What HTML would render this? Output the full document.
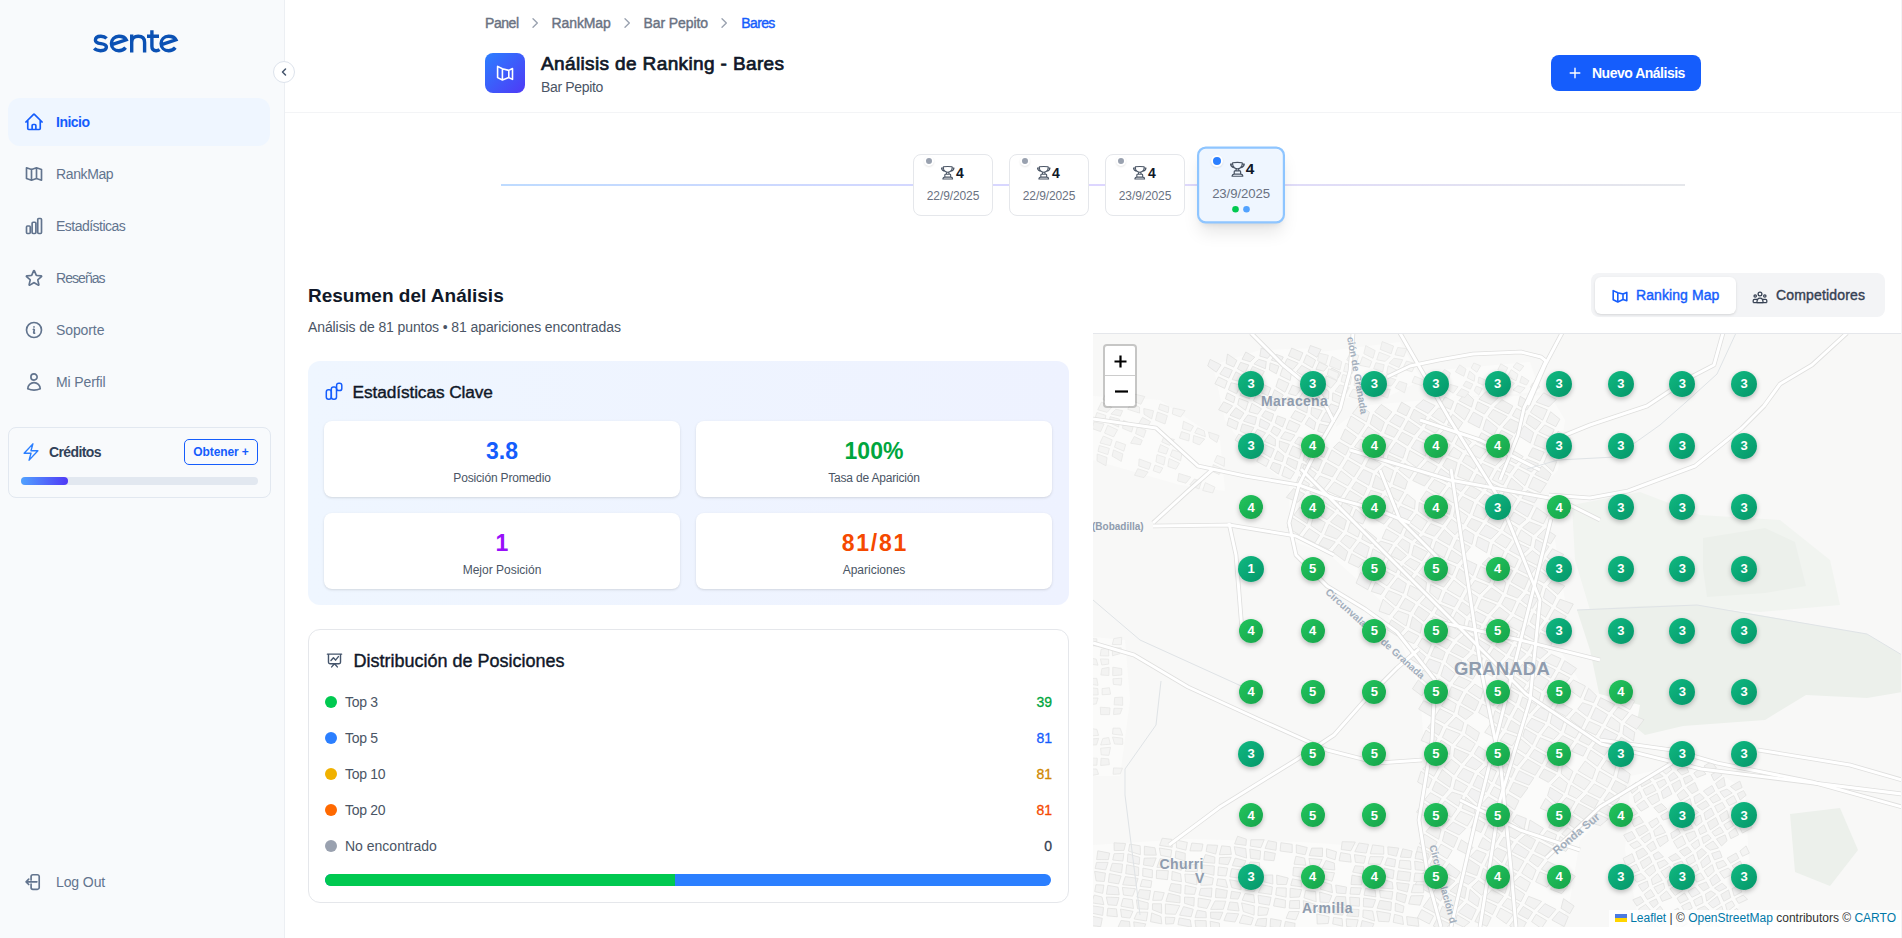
<!DOCTYPE html>
<html lang="es">
<head>
<meta charset="utf-8">
<title>Análisis de Ranking - Bares</title>
<style>
*{box-sizing:border-box;margin:0;padding:0}
html,body{width:1902px;height:938px;overflow:hidden;background:#fff;font-family:"Liberation Sans",sans-serif;color:#101828}
.abs{position:absolute}
svg{display:block}
.med{-webkit-text-stroke:0.4px currentColor}
/* sidebar */
#sb{position:absolute;left:0;top:0;width:285px;height:938px;background:#f8fafc;border-right:1px solid #eceff3}
.nav{position:absolute;left:8px;width:262px;height:48px;border-radius:12px;color:#62748e;font-size:14px;white-space:nowrap}
.nav svg{position:absolute;left:16px;top:14px;width:20px;height:20px}
.nav span{position:absolute;left:48px;top:16px;line-height:16px}
.nav.act{background:#eff6ff;color:#155dfc;font-weight:700}
.toggle{position:absolute;left:273px;top:61px;width:22px;height:22px;border-radius:50%;background:#fff;border:1px solid #dde3ec;z-index:5}
.toggle svg{position:absolute;left:4px;top:4px}
.credits{position:absolute;left:8px;top:427px;width:263px;height:71px;border:1px solid #e2e8f0;border-radius:8px;background:#f8fafc}
/* header */
#hdr{position:absolute;left:285px;top:0;width:1617px;height:113px;background:#fff;border-bottom:1px solid #f3f4f6}
.bc{position:absolute;top:15px;font-size:14px;line-height:16px;color:#6a7282;white-space:nowrap}
.chev{position:absolute;top:15px}
.btn{position:absolute;left:1551px;top:55px;width:150px;height:36px;border-radius:8px;background:#155dfc;color:#fff}
/* timeline */
.tcard{position:absolute;width:80px;height:62px;border:1px solid #e5e7eb;border-radius:8px;background:#fff}
.tdot{position:absolute;width:10px;height:10px;border-radius:50%;background:#99a1af;border:2px solid #fff;box-shadow:0 1px 2px rgba(0,0,0,.1)}
.tnum{position:absolute;font-weight:700;font-size:14px;line-height:16px;color:#101828}
.tdate{position:absolute;left:0;right:0;text-align:center;font-size:12px;line-height:14px;color:#6a7282;letter-spacing:-0.1px}
/* stats */
.stats{position:absolute;left:308px;top:361px;width:761px;height:244px;border-radius:12px;background:linear-gradient(90deg,#eff6ff,#eef2ff)}
.scard{position:absolute;width:356px;height:76px;background:#fff;border-radius:8px;box-shadow:0 1px 3px rgba(0,0,0,.1),0 1px 2px -1px rgba(0,0,0,.1);text-align:center}
.sval{position:absolute;left:0;right:0;top:17px;font-size:23px;line-height:26px;font-weight:700}
.slab{position:absolute;left:0;right:0;top:50px;font-size:12px;line-height:14px;color:#4a5565}
.dist{position:absolute;left:308px;top:629px;width:761px;height:274px;border-radius:12px;background:#fff;border:1px solid #e5e7eb}
.drow{position:absolute;left:16px;width:727px;height:20px;font-size:14px;color:#4a5565}
.drow .d{position:absolute;left:0;top:4px;width:12px;height:12px;border-radius:50%}
.drow .l{position:absolute;left:20px;top:2px;line-height:16px}
.drow .v{position:absolute;right:0;top:2px;line-height:16px;-webkit-text-stroke:0.3px currentColor}
.tabs{position:absolute;left:1591px;top:273px;width:294px;height:44px;border-radius:8px;background:#f3f4f6}
.tab{position:absolute;top:4px;height:36px;border-radius:6px;font-size:14px;white-space:nowrap}
#map{position:absolute;left:1093px;top:333px;width:809px;height:594px;background:#f8f8f7;overflow:hidden;border-top:1px solid #e5e7eb;border-right:1px solid #e5e7eb}
.mk{position:absolute;border-radius:50%;color:#fff;font-weight:700;font-size:13px;line-height:13px;text-align:center;box-shadow:0 2px 5px rgba(0,0,0,.25);font-family:"Liberation Sans",sans-serif}
.mk.t3{width:26px;height:26px;padding-top:6.3px;background:linear-gradient(135deg,#10b981,#059669)}
.mk.t5{width:24px;height:24px;padding-top:5.3px;background:linear-gradient(135deg,#22c55e,#16a34a)}
.zoom{position:absolute;left:10px;top:10px;width:34px;height:64px;border:2px solid rgba(0,0,0,.2);border-radius:4px;background:#fff;background-clip:padding-box}
.attr{position:absolute;right:0;bottom:0;height:17px;padding:0 5px 0 6px;background:rgba(255,255,255,.8);font-size:12px;color:#333;line-height:17px;white-space:nowrap}
.attr a{color:#0078a8;text-decoration:none}
.mlab{position:absolute;color:#8f9cae;font-weight:700;white-space:nowrap;line-height:1}
</style>
</head>
<body>
<!-- SIDEBAR -->
<div id="sb">
  <svg class="abs" style="left:85px;top:22px" width="100" height="38" viewBox="0 0 100 38" fill="none" stroke="#0b51b4" stroke-width="3.4" stroke-linecap="butt">
    <path d="M21.6 16.4C20.2 15 18.2 14.3 15.9 14.3C12.6 14.3 10.4 15.8 10.4 18.2C10.4 23.3 21.4 20.1 21.4 25.1C21.4 27.5 19 28.7 15.5 28.7C13 28.7 10.8 28 9.2 26.4"/>
    <path d="M26.8 22.7L41.2 17.8C40 15.4 37.2 14.3 33.9 14.3C29.5 14.3 26.4 17.4 26.4 21.5C26.4 25.6 29.5 28.7 33.9 28.7C36.6 28.7 38.9 27.7 40.6 25.6"/>
    <path d="M46.7 12.6V30.4M46.7 20.4C46.7 16.5 49.3 14.3 53.2 14.3C57.1 14.3 59.6 16.5 59.6 20.4V30.4"/>
    <path d="M66.9 8.2V24.3C66.9 27.3 68.4 28.7 71.1 28.7C72.4 28.7 73.6 28.4 74.6 27.7M62 14.3H74"/>
    <path d="M76.5 22.7L90.9 17.8C89.7 15.4 86.9 14.3 83.6 14.3C79.2 14.3 76.1 17.4 76.1 21.5C76.1 25.6 79.2 28.7 83.6 28.7C86.3 28.7 88.6 27.7 90.3 25.6"/>
  </svg>
  <div class="nav act" style="top:98px"><svg viewBox="0 0 24 24" fill="none" stroke="currentColor" stroke-width="2" stroke-linecap="round" stroke-linejoin="round"><path d="M2.25 12l8.954-8.955c.44-.439 1.152-.439 1.591 0L21.75 12M4.5 9.75v10.125c0 .621.504 1.125 1.125 1.125H9.75v-4.875c0-.621.504-1.125 1.125-1.125h2.25c.621 0 1.125.504 1.125 1.125V21h4.125c.621 0 1.125-.504 1.125-1.125V9.75M8.25 21h8.25"/></svg><span style="letter-spacing:-0.5px">Inicio</span></div>
  <div class="nav" style="top:150px"><svg viewBox="0 0 24 24" fill="none" stroke="currentColor" stroke-width="2" stroke-linecap="round" stroke-linejoin="round"><path d="M3 4.5L9 6.5L15 4.5L21 6.5V19.5L15 17.5L9 19.5L3 17.5Z M9 6.5V19.5 M15 4.5V17.5"/></svg><span style="letter-spacing:-0.38px">RankMap</span></div>
  <div class="nav" style="top:202px"><svg viewBox="0 0 24 24" fill="none" stroke="currentColor" stroke-width="2" stroke-linecap="round" stroke-linejoin="round"><path d="M3 13.125C3 12.504 3.504 12 4.125 12h2.25c.621 0 1.125.504 1.125 1.125v6.75C7.5 20.496 6.996 21 6.375 21h-2.25A1.125 1.125 0 0 1 3 19.875v-6.75ZM9.75 8.625c0-.621.504-1.125 1.125-1.125h2.25c.621 0 1.125.504 1.125 1.125v11.25c0 .621-.504 1.125-1.125 1.125h-2.25a1.125 1.125 0 0 1-1.125-1.125V8.625ZM16.5 4.125c0-.621.504-1.125 1.125-1.125h2.25C20.496 3 21 3.504 21 4.125v15.75c0 .621-.504 1.125-1.125 1.125h-2.25a1.125 1.125 0 0 1-1.125-1.125V4.125Z"/></svg><span style="letter-spacing:-0.52px">Estadísticas</span></div>
  <div class="nav" style="top:254px"><svg viewBox="0 0 24 24" fill="none" stroke="currentColor" stroke-width="2" stroke-linecap="round" stroke-linejoin="round"><path d="M11.48 3.499a.562.562 0 0 1 1.04 0l2.125 5.111a.563.563 0 0 0 .475.345l5.518.442c.499.04.701.663.321.988l-4.204 3.602a.563.563 0 0 0-.182.557l1.285 5.385a.562.562 0 0 1-.84.61l-4.725-2.885a.562.562 0 0 0-.586 0L6.982 20.54a.562.562 0 0 1-.84-.61l1.285-5.386a.562.562 0 0 0-.182-.557l-4.204-3.602a.562.562 0 0 1 .321-.988l5.518-.442a.563.563 0 0 0 .475-.345L11.48 3.5Z"/></svg><span style="letter-spacing:-0.95px">Reseñas</span></div>
  <div class="nav" style="top:306px"><svg viewBox="0 0 24 24" fill="none" stroke="currentColor" stroke-width="2" stroke-linecap="round" stroke-linejoin="round"><path d="m11.25 11.25.041-.02a.75.75 0 0 1 1.063.852l-.708 2.836a.75.75 0 0 0 1.063.853l.041-.021M21 12a9 9 0 1 1-18 0 9 9 0 0 1 18 0Zm-9-3.75h.008v.008H12V8.25Z"/></svg><span style="letter-spacing:-0.1px">Soporte</span></div>
  <div class="nav" style="top:358px"><svg viewBox="0 0 24 24" fill="none" stroke="currentColor" stroke-width="2" stroke-linecap="round" stroke-linejoin="round"><path d="M15.75 6a3.75 3.75 0 1 1-7.5 0 3.75 3.75 0 0 1 7.5 0ZM4.501 20.118a7.5 7.5 0 0 1 14.998 0A17.933 17.933 0 0 1 12 21.75c-2.676 0-5.216-.584-7.499-1.632Z"/></svg><span style="letter-spacing:-0.12px">Mi Perfil</span></div>
  <div class="credits">
    <svg class="abs" style="left:12px;top:14px" width="20" height="20" viewBox="0 0 24 24" fill="none" stroke="#2b7fff" stroke-width="1.7" stroke-linecap="round" stroke-linejoin="round"><path d="m3.75 13.5 10.5-11.25L12 10.5h8.25L9.75 21.75 12 13.5H3.75Z"/></svg>
    <div class="abs" style="left:40px;top:16px;font-size:14px;line-height:16px;font-weight:700;color:#314158;letter-spacing:-0.6px">Créditos</div>
    <div class="abs" style="left:175px;top:11px;width:74px;height:26px;border:1px solid #155dfc;border-radius:5px;font-size:12px;font-weight:700;color:#155dfc;text-align:center;line-height:25px;letter-spacing:-0.1px">Obtener +</div>
    <div class="abs" style="left:12px;top:49px;width:237px;height:8px;border-radius:4px;background:#e2e8f0"><div style="width:47px;height:8px;border-radius:4px;background:linear-gradient(90deg,#51a2ff,#4f39f6)"></div></div>
  </div>
  <div class="nav" style="top:858px"><svg viewBox="0 0 24 24" fill="none" stroke="currentColor" stroke-width="2" stroke-linecap="round" stroke-linejoin="round"><path d="M8.5 9.5V5.5A2.25 2.25 0 0 1 10.75 3.25h5.25A2.25 2.25 0 0 1 18.25 5.5v13a2.25 2.25 0 0 1-2.25 2.25h-5.25A2.25 2.25 0 0 1 8.5 18.5V14.5M15.5 11.8H2.5m0 0 3.2-3.2m-3.2 3.2 3.2 3.2"/></svg><span style="letter-spacing:-0.1px">Log Out</span></div>
</div>

<!-- HEADER -->
<div id="hdr"></div>
<div class="toggle"><svg width="12" height="12" viewBox="0 0 24 24" fill="none" stroke="#45556c" stroke-width="3" stroke-linecap="round" stroke-linejoin="round"><path d="M15 18l-6-6 6-6"/></svg></div>
<div class="bc med" style="left:485px;letter-spacing:-0.45px">Panel</div>
<div class="bc med" style="left:551.5px;letter-spacing:-0.1px">RankMap</div>
<div class="bc med" style="left:643.5px;letter-spacing:-0.1px">Bar Pepito</div>
<div class="bc med" style="left:741.3px;color:#155dfc;letter-spacing:-0.64px">Bares</div>
<svg class="abs" style="left:527px;top:15px" width="16" height="16" viewBox="0 0 24 24" fill="none" stroke="#99a1af" stroke-width="2" stroke-linecap="round" stroke-linejoin="round"><path d="M9 5.5l6.5 6.5-6.5 6.5"/></svg>
<svg class="abs" style="left:619px;top:15px" width="16" height="16" viewBox="0 0 24 24" fill="none" stroke="#99a1af" stroke-width="2" stroke-linecap="round" stroke-linejoin="round"><path d="M9 5.5l6.5 6.5-6.5 6.5"/></svg>
<svg class="abs" style="left:716px;top:15px" width="16" height="16" viewBox="0 0 24 24" fill="none" stroke="#99a1af" stroke-width="2" stroke-linecap="round" stroke-linejoin="round"><path d="M9 5.5l6.5 6.5-6.5 6.5"/></svg>
<div class="abs" style="left:485px;top:53px;width:40px;height:40px;border-radius:8px;background:linear-gradient(135deg,#2b7fff,#4f39f6)"><svg class="abs" style="left:0;top:0" width="40" height="40" viewBox="0 0 40 40" fill="none" stroke="#fff" stroke-width="1.6" stroke-linejoin="round"><path d="M12.6 13.4L17.4 15.8L23.8 17.4L27.5 15.5V26.4L23.8 24.6L17.4 27L12.6 24.6Z M17.4 15.8V27 M23.8 17.4V24.6"/></svg></div>
<div class="abs" style="left:541px;top:53px;font-size:19px;line-height:22px;font-weight:400;-webkit-text-stroke:0.7px #101828;color:#101828;white-space:nowrap;letter-spacing:0.37px">Análisis de Ranking - Bares</div>
<div class="abs" style="left:541px;top:79px;font-size:14px;line-height:16px;color:#4a5565;letter-spacing:-0.35px">Bar Pepito</div>
<div class="btn"><svg class="abs" style="left:18px;top:12px" width="12" height="12" viewBox="0 0 12 12" fill="none" stroke="#fff" stroke-width="1.4" stroke-linecap="round"><path d="M6 1.2v9.6M1.2 6h9.6"/></svg><span class="abs" style="left:41px;top:10px;font-size:14px;line-height:16px;font-weight:700;letter-spacing:-0.5px;white-space:nowrap">Nuevo Análisis</span></div>

<!-- TIMELINE -->
<div class="abs" style="left:501px;top:184px;width:1184px;height:2px;background:linear-gradient(90deg,#bedbff,#ddd6ff 50%,#e5e7eb)"></div>
<div class="tcard" style="left:913px;top:154px"><svg class="abs" style="left:26.3px;top:10.3px" width="15.5" height="15.5" viewBox="0 0 24 24" fill="none" stroke="#4a5565" stroke-width="1.7" stroke-linecap="round" stroke-linejoin="round"><path d="M16.5 18.75h-9m9 0a3 3 0 0 1 3 3h-15a3 3 0 0 1 3-3m9 0v-3.375c0-.621-.503-1.125-1.125-1.125h-.871M7.5 18.75v-3.375c0-.621.504-1.125 1.125-1.125h.872m5.007 0H9.497m5.007 0a7.454 7.454 0 0 1-.982-3.172M9.497 14.25a7.454 7.454 0 0 0 .981-3.172M5.25 4.236c-.982.143-1.954.317-2.916.52A6.003 6.003 0 0 0 7.73 9.728M5.25 4.236V4.5c0 2.108.966 3.99 2.48 5.228M5.25 4.236V2.721C7.456 2.41 9.71 2.25 12 2.25c2.291 0 4.545.16 6.75.47v1.516M7.73 9.728a6.726 6.726 0 0 0 2.748 1.35m8.272-6.842V4.5c0 2.108-.966 3.99-2.48 5.228m2.48-5.492a46.32 46.32 0 0 1 2.916.52 6.003 6.003 0 0 1-5.395 4.972m0 0a6.727 6.727 0 0 1-2.749 1.35m0 0a6.772 6.772 0 0 1-3.044 0"/></svg><div class="tnum" style="left:42px;top:10.2px">4</div><div class="tdate" style="top:33.6px">22/9/2025</div></div>
<div class="tdot" style="left:924px;top:156px"></div>
<div class="tcard" style="left:1009px;top:154px"><svg class="abs" style="left:26.3px;top:10.3px" width="15.5" height="15.5" viewBox="0 0 24 24" fill="none" stroke="#4a5565" stroke-width="1.7" stroke-linecap="round" stroke-linejoin="round"><path d="M16.5 18.75h-9m9 0a3 3 0 0 1 3 3h-15a3 3 0 0 1 3-3m9 0v-3.375c0-.621-.503-1.125-1.125-1.125h-.871M7.5 18.75v-3.375c0-.621.504-1.125 1.125-1.125h.872m5.007 0H9.497m5.007 0a7.454 7.454 0 0 1-.982-3.172M9.497 14.25a7.454 7.454 0 0 0 .981-3.172M5.25 4.236c-.982.143-1.954.317-2.916.52A6.003 6.003 0 0 0 7.73 9.728M5.25 4.236V4.5c0 2.108.966 3.99 2.48 5.228M5.25 4.236V2.721C7.456 2.41 9.71 2.25 12 2.25c2.291 0 4.545.16 6.75.47v1.516M7.73 9.728a6.726 6.726 0 0 0 2.748 1.35m8.272-6.842V4.5c0 2.108-.966 3.99-2.48 5.228m2.48-5.492a46.32 46.32 0 0 1 2.916.52 6.003 6.003 0 0 1-5.395 4.972m0 0a6.727 6.727 0 0 1-2.749 1.35m0 0a6.772 6.772 0 0 1-3.044 0"/></svg><div class="tnum" style="left:42px;top:10.2px">4</div><div class="tdate" style="top:33.6px">22/9/2025</div></div>
<div class="tdot" style="left:1020px;top:156px"></div>
<div class="tcard" style="left:1105px;top:154px"><svg class="abs" style="left:26.3px;top:10.3px" width="15.5" height="15.5" viewBox="0 0 24 24" fill="none" stroke="#4a5565" stroke-width="1.7" stroke-linecap="round" stroke-linejoin="round"><path d="M16.5 18.75h-9m9 0a3 3 0 0 1 3 3h-15a3 3 0 0 1 3-3m9 0v-3.375c0-.621-.503-1.125-1.125-1.125h-.871M7.5 18.75v-3.375c0-.621.504-1.125 1.125-1.125h.872m5.007 0H9.497m5.007 0a7.454 7.454 0 0 1-.982-3.172M9.497 14.25a7.454 7.454 0 0 0 .981-3.172M5.25 4.236c-.982.143-1.954.317-2.916.52A6.003 6.003 0 0 0 7.73 9.728M5.25 4.236V4.5c0 2.108.966 3.99 2.48 5.228M5.25 4.236V2.721C7.456 2.41 9.71 2.25 12 2.25c2.291 0 4.545.16 6.75.47v1.516M7.73 9.728a6.726 6.726 0 0 0 2.748 1.35m8.272-6.842V4.5c0 2.108-.966 3.99-2.48 5.228m2.48-5.492a46.32 46.32 0 0 1 2.916.52 6.003 6.003 0 0 1-5.395 4.972m0 0a6.727 6.727 0 0 1-2.749 1.35m0 0a6.772 6.772 0 0 1-3.044 0"/></svg><div class="tnum" style="left:42px;top:10.2px">4</div><div class="tdate" style="top:33.6px">23/9/2025</div></div>
<div class="tdot" style="left:1116px;top:156px"></div>
<div class="tcard" style="left:1201px;top:149.7px;width:80px;height:70px;border:2px solid #8ec5ff;background:#eff6ff;transform:scale(1.1);box-shadow:0 10px 15px -3px rgba(0,0,0,.1),0 4px 6px -4px rgba(0,0,0,.1)"><svg class="abs" style="left:26.5px;top:10.8px" width="15.5" height="15.5" viewBox="0 0 24 24" fill="none" stroke="#4a5565" stroke-width="1.7" stroke-linecap="round" stroke-linejoin="round"><path d="M16.5 18.75h-9m9 0a3 3 0 0 1 3 3h-15a3 3 0 0 1 3-3m9 0v-3.375c0-.621-.503-1.125-1.125-1.125h-.871M7.5 18.75v-3.375c0-.621.504-1.125 1.125-1.125h.872m5.007 0H9.497m5.007 0a7.454 7.454 0 0 1-.982-3.172M9.497 14.25a7.454 7.454 0 0 0 .981-3.172M5.25 4.236c-.982.143-1.954.317-2.916.52A6.003 6.003 0 0 0 7.73 9.728M5.25 4.236V4.5c0 2.108.966 3.99 2.48 5.228M5.25 4.236V2.721C7.456 2.41 9.71 2.25 12 2.25c2.291 0 4.545.16 6.75.47v1.516M7.73 9.728a6.726 6.726 0 0 0 2.748 1.35m8.272-6.842V4.5c0 2.108-.966 3.99-2.48 5.228m2.48-5.492a46.32 46.32 0 0 1 2.916.52 6.003 6.003 0 0 1-5.395 4.972m0 0a6.727 6.727 0 0 1-2.749 1.35m0 0a6.772 6.772 0 0 1-3.044 0"/></svg><div class="tnum" style="left:42.3px;top:10.45px">4</div><div class="tdate" style="top:33.9px">23/9/2025</div><div class="abs" style="left:30px;top:52.4px;width:6px;height:6px;border-radius:50%;background:#00c950"></div><div class="abs" style="left:39.8px;top:52.4px;width:6px;height:6px;border-radius:50%;background:#51a2ff"></div></div>
<div class="tdot" style="left:1211px;top:155px;width:12px;height:12px;background:#2b7fff"></div>

<!-- SUMMARY -->
<div class="abs" style="left:308px;top:285px;font-size:19px;line-height:22px;font-weight:700;color:#101828;white-space:nowrap">Resumen del Análisis</div>
<div class="abs" style="left:308px;top:319px;font-size:14px;line-height:16px;color:#4a5565;letter-spacing:-0.1px;white-space:nowrap">Análisis de 81 puntos • 81 apariciones encontradas</div>

<div class="stats">
  <svg class="abs" style="left:17px;top:21px" width="18" height="18" viewBox="0 0 18 18" fill="none" stroke="#155dfc" stroke-width="1.5" stroke-linejoin="round"><rect x="1.3" y="7.8" width="5" height="9.4" rx="2.2"/><rect x="6.3" y="4.9" width="5.2" height="12.3" rx="2.2"/><rect x="11.6" y="1.2" width="5.2" height="7.4" rx="2.2"/></svg>
  <div class="abs med" style="left:44.5px;top:21px;font-size:17.3px;line-height:20px;color:#101828;letter-spacing:-0.1px;white-space:nowrap">Estadísticas Clave</div>
  <div class="scard" style="left:16px;top:60px"><div class="sval" style="color:#155dfc">3.8</div><div class="slab" style="letter-spacing:-0.16px">Posición Promedio</div></div>
  <div class="scard" style="left:388px;top:60px"><div class="sval" style="color:#00a63e">100%</div><div class="slab" style="letter-spacing:-0.19px">Tasa de Aparición</div></div>
  <div class="scard" style="left:16px;top:152px"><div class="sval" style="color:#9810fa">1</div><div class="slab">Mejor Posición</div></div>
  <div class="scard" style="left:388px;top:152px"><div class="sval" style="color:#f54900;letter-spacing:1.7px;padding-left:1.7px">81/81</div><div class="slab">Apariciones</div></div>
</div>

<div class="dist">
  <svg class="abs" style="left:17px;top:22px" width="17" height="17" viewBox="0 0 24 24" fill="none" stroke="#45556c" stroke-width="2" stroke-linecap="round" stroke-linejoin="round"><path d="M2 3h20M3.5 3v11.5A2 2 0 0 0 5.5 16.5h13A2 2 0 0 0 20.5 14.5V3M12 16.5l-4 4.5M12 16.5l4 4.5M7 12l3.5-4 3 3.5 4-5"/></svg>
  <div class="abs med" style="left:44.5px;top:21px;font-size:18px;line-height:20px;color:#101828;white-space:nowrap">Distribución de Posiciones</div>
  <div class="drow" style="top:62px"><span class="d" style="background:#00c950"></span><span class="l" style="letter-spacing:-0.3px">Top 3</span><span class="v" style="color:#00a63e">39</span></div>
  <div class="drow" style="top:98px"><span class="d" style="background:#2b7fff"></span><span class="l" style="letter-spacing:-0.3px">Top 5</span><span class="v" style="color:#155dfc">81</span></div>
  <div class="drow" style="top:134px"><span class="d" style="background:#f0b100"></span><span class="l" style="letter-spacing:-0.3px">Top 10</span><span class="v" style="color:#d08700">81</span></div>
  <div class="drow" style="top:170px"><span class="d" style="background:#ff6900"></span><span class="l" style="letter-spacing:-0.3px">Top 20</span><span class="v" style="color:#f54900">81</span></div>
  <div class="drow" style="top:206px"><span class="d" style="background:#99a1af"></span><span class="l">No encontrado</span><span class="v" style="color:#364153">0</span></div>
  <div class="abs" style="left:16px;top:244px;width:726px;height:12px;border-radius:6px;overflow:hidden;background:#2b7fff"><div style="width:350px;height:12px;background:#00c950"></div></div>
</div>

<!-- TABS -->
<div class="tabs">
  <div class="tab" style="left:4px;width:141px;height:36.5px;background:#fff;color:#155dfc;box-shadow:0 1px 3px rgba(0,0,0,.1),0 1px 2px -1px rgba(0,0,0,.1)"><svg class="abs" style="left:16.5px;top:11px" width="16" height="16" viewBox="0 0 40 40" fill="none" stroke="currentColor" stroke-width="4" stroke-linejoin="round"><path d="M3 6.5L14.5 12L27.5 15L37 11V32L27.5 29L14.5 35L3 29.5Z M14.5 12V35 M27.5 15V29"/></svg><span class="abs med" style="left:41px;top:10px;line-height:16px;letter-spacing:0.09px">Ranking Map</span></div>
  <div class="tab" style="left:145px;width:145px;color:#364153"><svg class="abs" style="left:16px;top:13.8px" width="16" height="13" viewBox="0 0 16 13" fill="none" stroke="currentColor" stroke-width="1.25" stroke-linejoin="round"><circle cx="8" cy="3" r="1.9"/><circle cx="3.2" cy="5" r="1.2"/><circle cx="12.8" cy="5" r="1.2"/><path d="M4.9 11.6C4.9 8.7 6.2 7 8 7C9.8 7 11.1 8.7 11.1 11.6Z"/><path d="M1.2 11.6V9.6Q1.2 8.4 2.4 8.4H5.2"/><path d="M14.8 11.6V9.6Q14.8 8.4 13.6 8.4H10.8"/><path d="M1.2 11.6H14.8"/></svg><span class="abs med" style="left:40px;top:10px;line-height:16px;letter-spacing:0.16px">Competidores</span></div>
</div>

<div class="abs" style="left:1901px;top:0;width:1px;height:938px;background:#f3f4f6;z-index:3"></div>
<!-- MAP -->
<div id="map">
<svg class="abs" style="left:0;top:-1px" width="809" height="594" viewBox="0 0 809 594">
<defs>
<pattern id="urb" width="11" height="9" patternUnits="userSpaceOnUse" patternTransform="rotate(28)">
<rect width="11" height="9" fill="#f9f9f8"/><rect x="1.6" y="1.6" width="8" height="6" fill="#ececeb" stroke="#e2e2e1" stroke-width="0.5"/></pattern>
<pattern id="urb2" width="14" height="10" patternUnits="userSpaceOnUse" patternTransform="rotate(-20)">
<rect width="14" height="10" fill="#fafaf9"/><rect x="2" y="2" width="10" height="6" fill="#ededec" stroke="#e3e3e2" stroke-width="0.5"/></pattern>
<pattern id="urb3" width="18" height="12" patternUnits="userSpaceOnUse" patternTransform="rotate(10)">
<rect width="18" height="12" fill="#f9f9f8"/><rect x="2" y="2" width="14" height="8" fill="#efefee" stroke="#e4e4e3" stroke-width="0.5"/></pattern>
</defs>
<polygon points="479.0,172.0 547.0,159.0 607.0,182.0 687.0,187.0 737.0,227.0 747.0,272.0 667.0,279.0 587.0,273.0 497.0,277.0 482.0,227.0" fill="#f1f4f0"/>
<polygon points="484.0,277.0 547.0,273.0 604.0,272.0 667.0,282.0 733.0,294.0 774.0,301.0 809.0,322.0 809.0,359.0 774.0,365.0 713.0,362.0 672.0,387.0 590.0,393.0 552.0,402.0 507.0,365.0 497.0,317.0" fill="#ecf0eb"/>
<polygon points="610.0,205.0 672.0,195.0 702.0,209.0 713.0,253.0 672.0,260.0 614.0,264.0 610.0,236.0" fill="#ecf0eb"/>
<polygon points="697.0,481.0 747.0,475.0 765.0,517.0 737.0,553.0 702.0,539.0" fill="#ecf0eb"/>
<polygon points="120.0,32.0 167.0,17.0 227.0,15.0 247.0,47.0 242.0,107.0 217.0,137.0 187.0,145.0 157.0,122.0 132.0,87.0" fill="#fbfbfa"/>
<polygon points="277.0,72.0 357.0,65.0 457.0,62.0 472.0,87.0 465.0,137.0 437.0,167.0 462.0,207.0 472.0,267.0 467.0,317.0 492.0,357.0 547.0,372.0 537.0,427.0 527.0,467.0 487.0,507.0 477.0,567.0 467.0,594.0 332.0,594.0 327.0,507.0 332.0,427.0 327.0,357.0 307.0,307.0 287.0,267.0 237.0,222.0 197.0,207.0 196.0,137.0 227.0,107.0 252.0,87.0" fill="#fbfbfa"/>
<polygon points="227.0,19.0 307.0,9.0 329.0,47.0 292.0,65.0 242.0,65.0" fill="#fbfbfa"/>
<polygon points="347.0,37.0 437.0,29.0 447.0,59.0 357.0,65.0" fill="#fbfbfa"/>
<polygon points="538.0,443.0 607.0,427.0 652.0,457.0 657.0,547.0 637.0,594.0 547.0,594.0 532.0,517.0" fill="#fbfbfa"/>
<polygon points="0.0,512.0 95.0,506.0 207.0,509.0 329.0,517.0 332.0,594.0 0.0,594.0" fill="#fbfbfa"/>
<polygon points="0.0,63.0 67.0,67.0 127.0,107.0 132.0,158.0 87.0,152.0 0.0,127.0" fill="#fbfbfa"/>
<polygon points="0.0,304.0 32.0,307.0 37.0,367.0 27.0,443.0 0.0,443.0" fill="#fbfbfa"/>
<g stroke-width="0.7"><polygon points="117.1,26.4 128.1,31.9 123.3,39.2 114.7,32.9" fill="#f2f2f2" stroke="#dededd"/><polygon points="134.5,21.0 143.9,27.4 140.7,34.1 133.1,30.6" fill="#f2f2f1" stroke="#dededd"/><polygon points="131.6,34.0 139.4,37.2 135.8,45.1 126.8,41.0" fill="#f2f2f2" stroke="#dededd"/><polygon points="125.5,43.9 134.3,48.1 131.7,55.4 121.9,50.8" fill="#f4f4f3" stroke="#dededd"/><polygon points="152.8,19.0 161.8,24.2 157.2,28.8 149.0,26.3" fill="#f1f1f0" stroke="#dededd"/><polygon points="147.6,29.3 155.9,32.0 152.0,39.9 144.4,35.7" fill="#f1f1f0" stroke="#dededd"/><polygon points="142.9,38.8 150.4,43.0 148.3,48.8 139.2,46.6" fill="#f1f1f0" stroke="#dededd"/><polygon points="138.1,49.7 147.4,52.0 143.6,60.8 135.4,56.8" fill="#f2f2f1" stroke="#dededd"/><polygon points="134.3,59.8 142.1,63.8 140.7,69.9 132.4,65.8" fill="#f3f3f2" stroke="#dededd"/><polygon points="130.6,68.8 139.6,72.8 133.8,80.2 125.6,76.8" fill="#f2f2f1" stroke="#dededd"/><polygon points="168.2,15.1 179.5,19.3 174.5,25.4 166.8,23.1" fill="#f2f2f2" stroke="#dededd"/><polygon points="165.8,26.3 173.3,28.5 172.4,35.8 160.9,30.9" fill="#f2f2f2" stroke="#dededd"/><polygon points="159.7,33.4 171.4,38.4 167.2,46.3 155.4,41.8" fill="#f1f1f0" stroke="#dededd"/><polygon points="154.4,44.5 166.0,49.0 161.3,56.7 152.4,50.7" fill="#f2f2f1" stroke="#dededd"/><polygon points="150.8,53.4 159.8,59.4 156.5,65.7 147.2,62.4" fill="#f1f1f0" stroke="#dededd"/><polygon points="146.1,65.4 155.3,68.8 152.5,77.3 144.7,71.6" fill="#f4f4f3" stroke="#dededd"/><polygon points="142.8,74.6 150.9,80.0 146.9,86.3 137.0,82.2" fill="#f1f1f0" stroke="#dededd"/><polygon points="135.9,84.9 145.4,89.3 143.3,96.5 134.0,92.2" fill="#f3f3f2" stroke="#dededd"/><polygon points="183.0,21.2 190.3,24.0 187.2,30.0 178.3,27.1" fill="#f2f2f2" stroke="#dededd"/><polygon points="177.1,29.9 186.0,33.2 183.3,40.8 176.4,37.0" fill="#f2f2f1" stroke="#dededd"/><polygon points="169.5,51.0 177.9,55.0 174.9,62.6 164.9,58.4" fill="#f1f1f0" stroke="#dededd"/><polygon points="163.6,61.3 173.6,65.4 169.9,73.1 160.3,67.7" fill="#f1f1f0" stroke="#dededd"/><polygon points="158.9,70.3 168.5,75.8 164.7,81.2 156.0,78.8" fill="#f4f4f3" stroke="#dededd"/><polygon points="154.9,81.9 163.6,84.3 161.9,91.8 150.4,88.1" fill="#f2f2f2" stroke="#dededd"/><polygon points="149.4,90.8 161.0,94.5 156.3,102.4 147.2,98.1" fill="#f1f1f0" stroke="#dededd"/><polygon points="145.7,101.1 154.9,105.1 149.6,111.6 142.0,107.1" fill="#f4f4f3" stroke="#dededd"/><polygon points="198.7,15.1 209.9,19.8 206.5,27.7 195.4,22.8" fill="#f2f2f1" stroke="#dededd"/><polygon points="194.2,25.6 205.2,30.2 199.9,36.5 191.1,31.9" fill="#f3f3f2" stroke="#dededd"/><polygon points="189.7,34.6 198.5,39.5 197.2,47.5 187.0,42.5" fill="#f4f4f3" stroke="#dededd"/><polygon points="185.6,45.5 196.0,50.4 192.0,59.3 182.9,53.7" fill="#f3f3f2" stroke="#dededd"/><polygon points="181.5,56.7 190.4,62.0 187.0,67.4 178.6,64.2" fill="#f1f1f0" stroke="#dededd"/><polygon points="177.2,67.3 185.8,70.5 182.1,78.1 173.5,74.6" fill="#f1f1f0" stroke="#dededd"/><polygon points="172.3,77.7 180.7,81.1 178.3,88.4 168.6,83.2" fill="#f2f2f1" stroke="#dededd"/><polygon points="167.4,85.7 177.0,91.0 173.9,96.8 166.0,93.2" fill="#f2f2f2" stroke="#dededd"/><polygon points="164.4,96.3 172.7,99.8 167.8,106.3 159.9,103.8" fill="#f2f2f2" stroke="#dededd"/><polygon points="158.5,107.1 166.3,109.7 164.5,117.6 152.8,113.6" fill="#f4f4f3" stroke="#dededd"/><polygon points="217.4,12.5 228.1,16.4 224.0,24.3 215.0,18.9" fill="#f2f2f2" stroke="#dededd"/><polygon points="213.5,21.7 222.6,27.1 219.4,34.8 210.4,29.4" fill="#f3f3f2" stroke="#dededd"/><polygon points="208.7,32.3 217.9,37.4 212.6,44.2 203.6,38.7" fill="#f2f2f1" stroke="#dededd"/><polygon points="199.4,52.1 208.2,55.6 203.1,62.7 195.4,60.6" fill="#f4f4f3" stroke="#dededd"/><polygon points="194.3,63.9 201.4,66.1 199.6,73.1 190.8,69.2" fill="#f3f3f2" stroke="#dededd"/><polygon points="184.4,82.8 192.8,85.9 189.5,94.1 182.1,89.9" fill="#f2f2f1" stroke="#dededd"/><polygon points="180.6,93.1 188.0,97.0 184.2,103.3 177.8,98.7" fill="#f3f3f2" stroke="#dededd"/><polygon points="176.1,101.5 182.4,106.3 182.3,113.2 171.3,108.3" fill="#f3f3f2" stroke="#dededd"/><polygon points="170.1,110.9 181.3,116.0 177.6,124.7 168.5,119.1" fill="#f2f2f2" stroke="#dededd"/><polygon points="167.1,122.1 176.2,127.2 173.3,133.6 163.7,128.4" fill="#f4f4f3" stroke="#dededd"/><polygon points="226.2,29.0 234.9,33.2 230.8,38.2 222.9,36.3" fill="#f3f3f2" stroke="#dededd"/><polygon points="221.6,39.5 229.6,41.5 227.8,49.5 215.9,46.0" fill="#f2f2f1" stroke="#dededd"/><polygon points="215.1,48.7 226.8,52.1 221.8,59.1 213.2,54.4" fill="#f2f2f1" stroke="#dededd"/><polygon points="211.5,57.2 220.4,62.0 216.2,69.8 206.4,64.7" fill="#f4f4f3" stroke="#dededd"/><polygon points="205.3,67.4 214.7,72.7 213.9,79.9 203.5,74.9" fill="#f2f2f1" stroke="#dededd"/><polygon points="202.1,77.6 212.8,82.4 208.4,89.3 197.8,84.6" fill="#f4f4f3" stroke="#dededd"/><polygon points="196.4,87.2 207.1,92.1 203.2,99.4 193.0,95.7" fill="#f4f4f3" stroke="#dededd"/><polygon points="191.9,98.7 202.0,102.1 197.5,108.2 187.5,105.2" fill="#f4f4f3" stroke="#dededd"/><polygon points="186.4,107.9 196.4,111.3 192.6,119.9 186.3,114.6" fill="#f2f2f1" stroke="#dededd"/><polygon points="184.6,117.8 190.9,122.9 189.3,128.7 181.2,126.1" fill="#f2f2f1" stroke="#dededd"/><polygon points="179.9,129.3 188.2,132.0 185.4,141.2 177.1,135.4" fill="#f1f1f0" stroke="#dededd"/><polygon points="238.7,35.0 247.9,39.7 245.1,45.1 234.6,40.4" fill="#f1f1f0" stroke="#dededd"/><polygon points="233.2,42.8 244.1,47.8 237.8,55.2 231.8,50.8" fill="#f4f4f3" stroke="#dededd"/><polygon points="230.1,54.1 235.9,58.5 235.5,66.1 225.5,61.0" fill="#f2f2f2" stroke="#dededd"/><polygon points="224.1,63.8 234.3,68.7 230.3,74.5 219.7,71.6" fill="#f1f1f0" stroke="#dededd"/><polygon points="218.7,74.4 229.3,77.5 224.5,86.3 217.9,81.2" fill="#f3f3f2" stroke="#dededd"/><polygon points="216.2,84.4 222.8,89.3 221.1,96.8 212.2,91.2" fill="#f2f2f2" stroke="#dededd"/><polygon points="205.7,103.9 216.2,108.1 210.4,113.8 201.5,110.0" fill="#f3f3f2" stroke="#dededd"/><polygon points="199.9,112.8 208.9,117.1 206.3,125.9 195.9,121.5" fill="#f3f3f2" stroke="#dededd"/><polygon points="195.0,124.5 204.9,128.7 202.8,136.6 193.2,130.7" fill="#f1f1f0" stroke="#dededd"/><polygon points="191.7,133.4 201.6,139.3 197.4,146.1 188.8,142.7" fill="#f4f4f3" stroke="#dededd"/><polygon points="239.8,59.8 250.1,64.7 246.9,70.8 239.3,67.5" fill="#f3f3f2" stroke="#dededd"/><polygon points="237.9,70.8 245.8,73.8 242.7,82.7 234.3,76.4" fill="#f2f2f2" stroke="#dededd"/><polygon points="232.6,79.1 241.0,85.2 237.3,89.8 227.8,87.9" fill="#f2f2f2" stroke="#dededd"/><polygon points="226.8,90.9 236.2,93.1 232.6,100.9 224.6,98.1" fill="#f2f2f1" stroke="#dededd"/><polygon points="223.6,101.4 231.4,104.1 229.3,110.9 221.3,107.1" fill="#f3f3f2" stroke="#dededd"/><polygon points="219.7,110.2 228.1,113.8 224.6,122.3 214.0,116.0" fill="#f1f1f0" stroke="#dededd"/><polygon points="212.6,118.5 223.1,124.9 219.3,130.6 210.0,127.4" fill="#f4f4f3" stroke="#dededd"/><polygon points="208.9,130.4 218.2,133.7 216.0,141.6 206.6,138.0" fill="#f2f2f1" stroke="#dededd"/><polygon points="225.9,110.1 235.3,115.2 231.0,124.6 219.4,118.9" fill="#f4f4f3" stroke="#dededd"/><polygon points="217.9,121.8 229.4,127.5 225.0,138.0 212.6,129.2" fill="#f1f1f0" stroke="#dededd"/><polygon points="211.1,131.6 223.4,140.4 218.1,148.3 207.4,141.0" fill="#f3f3f2" stroke="#dededd"/><polygon points="205.9,143.5 216.5,150.9 213.0,158.3 202.3,152.6" fill="#f3f3f2" stroke="#dededd"/><polygon points="200.5,155.5 211.7,161.0 205.0,169.3 193.3,164.4" fill="#f1f1f0" stroke="#dededd"/><polygon points="266.1,72.1 276.5,79.2 273.4,88.9 259.5,80.5" fill="#f4f4f3" stroke="#dededd"/><polygon points="258.0,83.0 271.9,91.5 265.3,101.4 253.8,93.2" fill="#f4f4f3" stroke="#dededd"/><polygon points="252.1,95.9 263.5,104.0 258.0,112.0 247.5,106.0" fill="#f2f2f1" stroke="#dededd"/><polygon points="246.0,108.9 256.2,114.6 252.5,122.2 240.4,114.6" fill="#f2f2f1" stroke="#dededd"/><polygon points="238.9,116.9 251.1,124.7 245.9,133.0 234.5,126.6" fill="#f4f4f3" stroke="#dededd"/><polygon points="233.0,129.4 244.4,135.9 239.4,144.0 228.4,139.7" fill="#f1f1f0" stroke="#dededd"/><polygon points="226.9,142.9 237.9,147.0 230.9,155.8 221.7,150.3" fill="#f4f4f3" stroke="#dededd"/><polygon points="220.2,153.1 228.9,158.6 225.9,165.7 216.8,160.2" fill="#f2f2f2" stroke="#dededd"/><polygon points="214.9,163.1 224.4,168.6 218.9,177.9 208.4,171.4" fill="#f3f3f2" stroke="#dededd"/><polygon points="206.8,174.2 217.0,180.8 214.2,190.7 200.9,182.1" fill="#f2f2f1" stroke="#dededd"/><polygon points="199.3,184.6 212.7,193.1 206.3,201.8 194.2,194.5" fill="#f3f3f2" stroke="#dededd"/><polygon points="288.2,71.4 298.9,78.9 293.2,86.5 281.7,78.9" fill="#f2f2f1" stroke="#dededd"/><polygon points="280.2,81.2 291.5,89.2 288.0,98.6 277.1,90.9" fill="#f1f1f0" stroke="#dededd"/><polygon points="275.2,93.7 286.5,101.0 278.9,106.6 268.7,103.3" fill="#f3f3f2" stroke="#dededd"/><polygon points="267.2,106.2 277.1,110.0 274.5,119.8 261.4,114.0" fill="#f4f4f3" stroke="#dededd"/><polygon points="260.2,116.7 273.3,122.4 268.6,131.5 256.3,124.3" fill="#f2f2f2" stroke="#dededd"/><polygon points="254.7,126.9 267.2,134.1 260.9,144.0 249.6,135.3" fill="#f3f3f2" stroke="#dededd"/><polygon points="248.0,137.8 259.0,146.3 254.8,152.8 243.1,146.3" fill="#f4f4f3" stroke="#dededd"/><polygon points="241.4,148.8 253.4,155.5 247.8,164.2 234.1,157.9" fill="#f3f3f2" stroke="#dededd"/><polygon points="232.9,160.5 246.3,166.9 242.6,176.8 229.6,168.0" fill="#f4f4f3" stroke="#dededd"/><polygon points="227.9,170.5 241.3,179.1 234.1,186.7 222.2,180.1" fill="#f2f2f1" stroke="#dededd"/><polygon points="220.7,182.8 232.4,189.6 228.2,199.7 217.9,192.5" fill="#f3f3f2" stroke="#dededd"/><polygon points="216.2,195.5 226.6,202.3 221.9,209.9 209.8,204.0" fill="#f3f3f2" stroke="#dededd"/><polygon points="308.6,69.1 317.4,74.5 313.4,82.9 304.0,78.2" fill="#f1f1f0" stroke="#dededd"/><polygon points="302.3,81.3 311.8,85.9 307.1,94.4 296.6,88.5" fill="#f2f2f2" stroke="#dededd"/><polygon points="295.1,91.3 305.5,97.2 301.1,104.4 291.6,100.3" fill="#f2f2f1" stroke="#dededd"/><polygon points="289.7,103.5 299.6,107.3 293.1,117.1 282.2,109.1" fill="#f2f2f2" stroke="#dededd"/><polygon points="280.7,111.4 291.1,119.8 289.7,128.2 278.4,121.6" fill="#f4f4f3" stroke="#dededd"/><polygon points="276.8,124.5 288.4,130.7 281.1,137.0 272.3,133.2" fill="#f1f1f0" stroke="#dededd"/><polygon points="270.5,136.4 279.4,140.6 275.8,152.4 264.2,145.8" fill="#f2f2f2" stroke="#dededd"/><polygon points="262.9,148.7 274.1,155.0 270.6,162.7 258.6,155.2" fill="#f2f2f1" stroke="#dededd"/><polygon points="256.9,157.6 269.3,165.0 261.3,171.1 251.5,166.2" fill="#f3f3f2" stroke="#dededd"/><polygon points="249.8,169.0 259.6,174.4 255.3,184.7 246.4,178.3" fill="#f3f3f2" stroke="#dededd"/><polygon points="244.6,181.5 253.5,187.6 250.8,197.0 237.5,189.0" fill="#f1f1f0" stroke="#dededd"/><polygon points="236.1,191.4 249.4,199.5 243.6,206.2 231.7,201.6" fill="#f2f2f1" stroke="#dededd"/><polygon points="230.4,204.4 242.3,208.9 235.9,216.4 225.6,211.8" fill="#f1f1f0" stroke="#dededd"/><polygon points="330.3,66.7 342.1,72.6 335.1,80.6 322.5,73.8" fill="#f2f2f2" stroke="#dededd"/><polygon points="321.0,76.2 333.4,83.4 328.4,92.9 316.9,85.1" fill="#f1f1f0" stroke="#dededd"/><polygon points="315.3,87.7 326.8,95.4 321.3,102.0 310.6,96.5" fill="#f1f1f0" stroke="#dededd"/><polygon points="309.1,99.2 319.8,104.7 314.7,112.7 304.8,106.5" fill="#f1f1f0" stroke="#dededd"/><polygon points="303.0,109.3 313.1,115.7 309.9,125.3 296.2,119.1" fill="#f2f2f2" stroke="#dededd"/><polygon points="295.1,121.7 308.5,127.8 302.0,134.2 293.5,129.9" fill="#f1f1f0" stroke="#dededd"/><polygon points="291.6,133.0 300.6,137.4 296.7,149.5 284.3,139.6" fill="#f4f4f3" stroke="#dededd"/><polygon points="282.8,141.9 294.9,151.9 290.3,157.9 279.2,154.1" fill="#f1f1f0" stroke="#dededd"/><polygon points="277.8,157.2 289.0,160.9 281.9,170.5 274.4,164.5" fill="#f2f2f1" stroke="#dededd"/><polygon points="272.2,167.6 279.8,173.3 275.0,181.9 264.6,173.7" fill="#f2f2f2" stroke="#dededd"/><polygon points="262.9,176.1 273.0,184.5 269.8,191.1 258.6,186.6" fill="#f2f2f2" stroke="#dededd"/><polygon points="257.3,189.5 268.5,194.2 265.0,204.2 254.5,198.6" fill="#f4f4f3" stroke="#dededd"/><polygon points="252.9,201.8 263.5,206.9 256.8,215.9 247.5,208.4" fill="#f3f3f2" stroke="#dededd"/><polygon points="245.6,211.0 254.8,218.6 251.8,228.0 239.4,218.9" fill="#f1f1f0" stroke="#dededd"/><polygon points="352.0,63.9 360.7,68.4 357.5,76.5 347.3,71.8" fill="#f2f2f1" stroke="#dededd"/><polygon points="345.6,74.9 356.2,79.5 350.9,90.2 338.6,82.8" fill="#f3f3f2" stroke="#dededd"/><polygon points="337.0,85.5 349.2,92.8 342.4,100.2 331.9,94.9" fill="#f2f2f1" stroke="#dededd"/><polygon points="330.5,97.7 340.6,102.9 336.3,109.3 325.0,104.2" fill="#f2f2f2" stroke="#dededd"/><polygon points="323.5,106.7 335.0,112.2 332.5,123.2 318.2,114.9" fill="#f2f2f2" stroke="#dededd"/><polygon points="316.8,117.5 331.2,125.6 323.4,134.4 313.7,127.3" fill="#f4f4f3" stroke="#dededd"/><polygon points="311.8,130.1 321.5,137.0 316.4,145.5 305.6,136.7" fill="#f4f4f3" stroke="#dededd"/><polygon points="304.0,139.0 314.5,148.2 312.0,156.4 300.0,151.2" fill="#f2f2f1" stroke="#dededd"/><polygon points="298.7,154.2 310.8,159.1 305.3,168.5 294.1,160.3" fill="#f3f3f2" stroke="#dededd"/><polygon points="292.3,162.7 303.6,171.1 299.1,180.5 285.0,172.8" fill="#f4f4f3" stroke="#dededd"/><polygon points="283.6,175.4 297.6,183.0 291.0,191.2 278.2,184.3" fill="#f1f1f0" stroke="#dededd"/><polygon points="272.0,195.8 284.0,205.6 278.0,210.9 268.7,206.1" fill="#f2f2f1" stroke="#dededd"/><polygon points="266.9,209.0 276.4,214.1 273.3,225.2 260.0,218.0" fill="#f2f2f2" stroke="#dededd"/><polygon points="258.7,220.7 271.8,227.8 265.5,234.6 255.3,229.8" fill="#f3f3f2" stroke="#dededd"/><polygon points="373.4,59.6 380.7,66.6 378.5,74.2 365.8,67.6" fill="#f2f2f1" stroke="#dededd"/><polygon points="364.4,70.0 377.1,76.9 371.5,87.1 361.3,78.7" fill="#f3f3f2" stroke="#dededd"/><polygon points="359.5,81.3 369.8,89.6 365.5,95.9 354.4,92.0" fill="#f3f3f2" stroke="#dededd"/><polygon points="352.8,95.0 364.1,98.9 358.7,109.3 345.8,102.4" fill="#f2f2f2" stroke="#dededd"/><polygon points="344.4,105.0 357.2,111.8 351.8,120.5 340.2,111.7" fill="#f4f4f3" stroke="#dededd"/><polygon points="338.6,114.0 350.2,123.0 345.9,130.7 336.3,124.8" fill="#f4f4f3" stroke="#dededd"/><polygon points="334.4,128.0 344.3,133.6 339.4,141.7 326.7,136.5" fill="#f4f4f3" stroke="#dededd"/><polygon points="325.2,139.2 337.9,144.5 331.4,153.1 319.7,147.5" fill="#f1f1f0" stroke="#dededd"/><polygon points="314.2,161.1 322.3,167.7 321.5,176.3 308.8,170.4" fill="#f4f4f3" stroke="#dededd"/><polygon points="307.4,173.2 320.3,178.9 313.7,187.3 302.7,182.3" fill="#f2f2f2" stroke="#dededd"/><polygon points="301.1,185.3 312.1,190.3 307.5,200.9 294.7,193.3" fill="#f2f2f1" stroke="#dededd"/><polygon points="293.3,195.9 305.9,203.3 300.7,209.2 289.1,205.3" fill="#f4f4f3" stroke="#dededd"/><polygon points="287.8,208.1 299.5,211.8 294.0,220.3 281.5,213.3" fill="#f3f3f2" stroke="#dededd"/><polygon points="280.0,215.7 292.5,223.1 288.3,232.3 276.9,226.8" fill="#f2f2f1" stroke="#dededd"/><polygon points="275.4,230.0 286.8,235.1 280.6,244.4 269.1,236.9" fill="#f3f3f2" stroke="#dededd"/><polygon points="267.5,239.4 278.9,247.3 274.8,256.8 263.1,250.1" fill="#f2f2f2" stroke="#dededd"/><polygon points="392.9,58.5 405.4,64.4 397.9,71.6 385.9,66.2" fill="#f1f1f0" stroke="#dededd"/><polygon points="384.7,68.7 396.2,74.3 391.3,81.1 382.3,76.1" fill="#f2f2f1" stroke="#dededd"/><polygon points="380.5,79.0 390.0,84.3 386.4,94.9 374.9,88.9" fill="#f2f2f2" stroke="#dededd"/><polygon points="367.3,100.7 378.4,109.3 371.3,117.0 362.3,111.1" fill="#f4f4f3" stroke="#dededd"/><polygon points="360.6,114.1 369.2,119.9 365.5,126.2 355.3,122.3" fill="#f4f4f3" stroke="#dededd"/><polygon points="353.9,125.2 364.2,129.5 361.1,141.9 349.5,132.9" fill="#f1f1f0" stroke="#dededd"/><polygon points="347.9,135.5 359.5,144.1 354.4,149.4 343.0,143.9" fill="#f2f2f2" stroke="#dededd"/><polygon points="341.3,146.5 353.0,152.2 346.3,161.4 335.0,155.2" fill="#f3f3f2" stroke="#dededd"/><polygon points="333.4,157.9 344.5,164.4 340.9,173.8 327.5,166.9" fill="#f2f2f1" stroke="#dededd"/><polygon points="326.3,169.4 339.5,176.4 335.8,185.8 325.4,178.2" fill="#f1f1f0" stroke="#dededd"/><polygon points="323.6,181.0 334.4,188.4 328.5,197.8 317.2,189.6" fill="#f4f4f3" stroke="#dededd"/><polygon points="315.4,192.2 326.6,200.4 319.3,207.3 311.1,202.6" fill="#f2f2f1" stroke="#dededd"/><polygon points="309.4,205.7 317.2,210.5 315.2,220.5 304.7,211.5" fill="#f2f2f1" stroke="#dededd"/><polygon points="302.9,213.8 313.6,222.6 307.9,227.7 297.7,222.5" fill="#f2f2f1" stroke="#dededd"/><polygon points="296.2,225.1 306.3,230.7 303.1,239.9 292.0,234.1" fill="#f2f2f1" stroke="#dededd"/><polygon points="290.1,237.1 301.7,242.8 294.0,252.8 284.0,246.4" fill="#f4f4f3" stroke="#dededd"/><polygon points="282.4,249.3 291.9,255.6 288.0,261.5 278.3,258.4" fill="#f2f2f2" stroke="#dededd"/><polygon points="408.9,66.7 419.9,73.0 415.5,81.0 401.4,74.0" fill="#f1f1f0" stroke="#dededd"/><polygon points="400.0,76.4 414.2,83.4 406.5,92.4 395.0,83.6" fill="#f2f2f1" stroke="#dededd"/><polygon points="393.4,85.9 404.6,94.9 400.7,102.6 389.9,96.7" fill="#f2f2f2" stroke="#dededd"/><polygon points="388.4,99.7 399.2,105.5 395.2,114.4 383.6,108.7" fill="#f2f2f1" stroke="#dededd"/><polygon points="381.9,111.7 393.8,117.1 387.1,125.6 374.4,119.3" fill="#f4f4f3" stroke="#dededd"/><polygon points="373.1,121.8 385.5,128.2 381.6,136.3 369.3,128.6" fill="#f3f3f2" stroke="#dededd"/><polygon points="367.7,130.9 380.2,139.0 375.7,147.8 364.5,143.3" fill="#f2f2f1" stroke="#dededd"/><polygon points="363.3,146.6 374.3,150.5 367.9,158.6 358.2,151.8" fill="#f2f2f2" stroke="#dededd"/><polygon points="356.2,154.3 366.1,161.3 360.4,170.0 349.6,163.5" fill="#f4f4f3" stroke="#dededd"/><polygon points="348.2,166.3 358.6,172.9 356.5,181.5 344.6,175.6" fill="#f2f2f1" stroke="#dededd"/><polygon points="343.3,178.4 355.3,184.1 349.7,191.7 339.5,187.4" fill="#f2f2f1" stroke="#dededd"/><polygon points="337.8,190.6 348.3,194.7 341.3,203.3 331.7,199.5" fill="#f2f2f1" stroke="#dededd"/><polygon points="330.0,202.7 339.5,206.6 336.1,216.4 322.3,209.6" fill="#f2f2f2" stroke="#dededd"/><polygon points="321.1,212.1 334.7,219.1 328.9,227.8 318.7,222.2" fill="#f2f2f1" stroke="#dededd"/><polygon points="317.2,225.3 327.4,230.3 322.0,237.6 311.4,230.3" fill="#f3f3f2" stroke="#dededd"/><polygon points="309.8,232.5 320.3,240.2 315.1,247.4 306.8,241.8" fill="#f4f4f3" stroke="#dededd"/><polygon points="304.8,244.8 313.4,250.6 310.4,260.3 297.0,254.7" fill="#f2f2f2" stroke="#dededd"/><polygon points="295.8,257.6 309.0,263.0 303.0,273.1 291.9,263.9" fill="#f3f3f2" stroke="#dededd"/><polygon points="290.1,266.2 301.3,275.6 296.3,281.9 286.0,278.1" fill="#f4f4f3" stroke="#dededd"/><polygon points="427.1,63.2 438.0,69.9 433.8,77.1 425.0,72.2" fill="#f2f2f1" stroke="#dededd"/><polygon points="423.5,75.2 432.3,80.1 429.2,87.8 419.3,82.7" fill="#f4f4f3" stroke="#dededd"/><polygon points="417.4,85.8 427.9,90.8 421.6,100.4 409.8,94.4" fill="#f1f1f0" stroke="#dededd"/><polygon points="408.4,97.2 419.8,103.1 414.9,110.7 404.4,104.7" fill="#f2f2f2" stroke="#dededd"/><polygon points="402.8,107.3 413.5,113.7 410.2,124.1 398.9,116.3" fill="#f3f3f2" stroke="#dededd"/><polygon points="397.2,119.2 408.7,126.5 402.3,132.8 390.7,127.7" fill="#f3f3f2" stroke="#dededd"/><polygon points="389.3,130.4 400.7,135.7 395.8,144.8 385.4,138.3" fill="#f2f2f1" stroke="#dededd"/><polygon points="383.8,141.0 394.2,147.6 390.1,156.0 379.5,149.7" fill="#f1f1f0" stroke="#dededd"/><polygon points="377.7,152.6 388.5,158.7 382.3,166.0 371.3,160.7" fill="#f2f2f1" stroke="#dededd"/><polygon points="369.6,163.5 380.7,169.1 376.5,180.6 363.8,172.2" fill="#f2f2f1" stroke="#dededd"/><polygon points="362.4,174.7 374.9,183.1 370.3,191.2 360.4,183.6" fill="#f4f4f3" stroke="#dededd"/><polygon points="358.5,186.2 368.8,193.7 362.0,201.8 353.4,194.0" fill="#f3f3f2" stroke="#dededd"/><polygon points="351.4,196.6 359.9,204.5 356.5,212.3 344.6,205.6" fill="#f1f1f0" stroke="#dededd"/><polygon points="343.1,208.2 355.0,215.2 351.0,225.0 339.8,218.1" fill="#f3f3f2" stroke="#dededd"/><polygon points="338.3,221.0 349.5,227.6 345.5,234.6 332.5,229.7" fill="#f2f2f2" stroke="#dededd"/><polygon points="331.0,232.5 344.3,237.2 335.6,246.8 325.4,239.9" fill="#f4f4f3" stroke="#dededd"/><polygon points="323.9,242.4 333.6,249.4 332.6,257.4 318.5,249.9" fill="#f1f1f0" stroke="#dededd"/><polygon points="317.1,252.2 331.5,259.8 323.9,268.2 314.1,262.1" fill="#f3f3f2" stroke="#dededd"/><polygon points="312.3,265.1 322.1,271.2 317.4,278.8 306.4,274.9" fill="#f2f2f1" stroke="#dededd"/><polygon points="305.1,277.8 316.0,281.9 313.1,293.1 299.9,284.2" fill="#f4f4f3" stroke="#dededd"/><polygon points="298.3,286.7 311.6,295.4 304.6,303.2 293.7,296.4" fill="#f1f1f0" stroke="#dededd"/><polygon points="450.7,59.8 463.3,66.4 455.9,73.8 443.2,69.1" fill="#f2f2f2" stroke="#dededd"/><polygon points="441.9,71.8 454.3,76.8 449.6,87.2 437.4,79.3" fill="#f3f3f2" stroke="#dededd"/><polygon points="436.0,81.8 448.1,89.5 442.4,96.7 433.0,90.0" fill="#f2f2f1" stroke="#dededd"/><polygon points="431.1,92.7 440.7,99.6 437.4,110.1 425.0,102.4" fill="#f2f2f2" stroke="#dededd"/><polygon points="417.1,115.5 430.2,123.6 423.1,130.9 413.8,125.9" fill="#f4f4f3" stroke="#dededd"/><polygon points="412.1,129.0 421.3,133.7 416.6,140.2 405.9,135.0" fill="#f3f3f2" stroke="#dededd"/><polygon points="404.3,137.6 415.1,143.1 410.2,152.0 399.3,146.6" fill="#f4f4f3" stroke="#dededd"/><polygon points="397.8,149.6 408.7,155.0 404.1,163.6 393.6,157.9" fill="#f3f3f2" stroke="#dededd"/><polygon points="392.0,160.9 402.6,166.4 397.4,175.8 385.8,168.3" fill="#f1f1f0" stroke="#dededd"/><polygon points="384.2,170.9 395.7,178.6 390.9,186.8 379.9,182.2" fill="#f3f3f2" stroke="#dededd"/><polygon points="378.5,185.4 389.4,189.8 383.1,198.8 373.9,193.1" fill="#f1f1f0" stroke="#dededd"/><polygon points="372.1,196.1 381.2,201.8 378.9,211.5 365.1,204.2" fill="#f2f2f2" stroke="#dededd"/><polygon points="363.8,206.7 377.5,213.9 371.3,221.9 360.2,214.6" fill="#f2f2f1" stroke="#dededd"/><polygon points="358.6,217.1 369.6,224.5 364.4,230.7 354.6,226.7" fill="#f2f2f1" stroke="#dededd"/><polygon points="353.3,229.7 362.9,233.7 359.2,242.2 349.4,236.4" fill="#f4f4f3" stroke="#dededd"/><polygon points="347.3,239.3 357.7,245.1 350.7,254.2 338.7,248.8" fill="#f2f2f1" stroke="#dededd"/><polygon points="337.6,251.5 348.9,257.2 345.2,266.7 336.7,259.3" fill="#f3f3f2" stroke="#dededd"/><polygon points="334.6,262.1 343.6,269.3 338.7,278.3 327.2,270.5" fill="#f3f3f2" stroke="#dededd"/><polygon points="325.6,273.1 336.8,280.8 331.0,288.5 321.1,281.1" fill="#f1f1f0" stroke="#dededd"/><polygon points="319.5,283.6 329.3,291.4 327.3,300.3 316.7,294.6" fill="#f1f1f0" stroke="#dededd"/><polygon points="315.2,297.8 325.9,303.0 320.9,310.6 307.9,305.4" fill="#f3f3f2" stroke="#dededd"/><polygon points="457.6,78.7 466.9,86.2 462.8,93.7 453.2,88.8" fill="#f3f3f2" stroke="#dededd"/><polygon points="451.7,91.9 461.2,96.6 457.9,104.4 445.8,98.8" fill="#f4f4f3" stroke="#dededd"/><polygon points="444.5,101.4 456.6,107.3 452.5,116.3 440.9,111.7" fill="#f2f2f1" stroke="#dededd"/><polygon points="439.7,114.7 451.2,119.2 447.0,128.1 435.3,122.9" fill="#f1f1f0" stroke="#dededd"/><polygon points="433.7,125.9 445.6,130.8 438.4,139.1 426.5,133.2" fill="#f2f2f2" stroke="#dededd"/><polygon points="425.0,135.8 436.6,141.9 431.9,152.7 420.2,142.7" fill="#f4f4f3" stroke="#dededd"/><polygon points="418.5,145.0 430.2,154.9 425.4,163.3 413.9,154.4" fill="#f2f2f1" stroke="#dededd"/><polygon points="412.2,156.9 423.8,165.7 418.7,174.2 407.7,165.9" fill="#f3f3f2" stroke="#dededd"/><polygon points="406.0,168.4 417.0,176.7 412.8,184.1 400.9,177.9" fill="#f4f4f3" stroke="#dededd"/><polygon points="399.4,180.6 411.4,186.8 407.0,195.9 394.5,188.9" fill="#f4f4f3" stroke="#dededd"/><polygon points="392.8,191.6 405.5,198.5 398.0,206.1 386.3,200.9" fill="#f2f2f2" stroke="#dededd"/><polygon points="385.0,203.6 396.4,209.3 393.7,219.8 382.7,213.1" fill="#f2f2f2" stroke="#dededd"/><polygon points="373.3,226.7 383.9,231.7 379.9,242.6 368.0,233.2" fill="#f2f2f2" stroke="#dededd"/><polygon points="366.4,235.5 378.3,244.9 373.3,253.0 362.8,244.6" fill="#f2f2f1" stroke="#dededd"/><polygon points="360.9,247.1 371.6,255.6 367.1,264.2 354.0,256.5" fill="#f4f4f3" stroke="#dededd"/><polygon points="352.7,259.0 365.6,266.8 361.4,274.0 348.7,268.7" fill="#f2f2f2" stroke="#dededd"/><polygon points="347.3,271.4 360.3,276.9 354.6,287.6 342.0,280.4" fill="#f2f2f1" stroke="#dededd"/><polygon points="340.5,283.2 353.0,290.2 347.8,299.0 334.4,290.9" fill="#f3f3f2" stroke="#dededd"/><polygon points="333.1,293.3 346.3,301.3 340.0,308.2 331.0,302.3" fill="#f2f2f2" stroke="#dededd"/><polygon points="329.3,305.1 338.4,311.2 334.4,321.0 324.7,312.8" fill="#f2f2f1" stroke="#dededd"/><polygon points="322.7,315.5 332.6,323.6 327.7,332.5 314.8,324.3" fill="#f2f2f2" stroke="#dededd"/><polygon points="465.0,98.4 478.0,105.3 472.2,113.3 461.7,106.5" fill="#f2f2f2" stroke="#dededd"/><polygon points="460.0,109.2 470.7,116.1 465.5,125.8 456.3,118.2" fill="#f2f2f2" stroke="#dededd"/><polygon points="454.5,121.0 463.6,128.7 460.0,138.6 450.8,130.1" fill="#f2f2f1" stroke="#dededd"/><polygon points="448.9,132.9 458.2,141.0 454.9,147.7 441.8,141.4" fill="#f1f1f0" stroke="#dededd"/><polygon points="440.3,143.9 453.6,150.5 447.4,159.8 435.4,154.5" fill="#f3f3f2" stroke="#dededd"/><polygon points="434.1,157.4 445.8,162.6 441.4,169.9 428.9,165.3" fill="#f2f2f2" stroke="#dededd"/><polygon points="427.5,168.0 440.3,172.8 434.6,184.0 422.1,176.4" fill="#f2f2f2" stroke="#dededd"/><polygon points="420.7,179.0 433.0,186.3 426.2,192.0 416.5,186.3" fill="#f2f2f2" stroke="#dededd"/><polygon points="414.8,188.9 424.5,195.0 420.2,204.1 410.7,197.8" fill="#f4f4f3" stroke="#dededd"/><polygon points="408.7,200.8 418.5,206.8 412.9,215.3 401.5,208.4" fill="#f3f3f2" stroke="#dededd"/><polygon points="400.0,211.0 411.2,218.2 407.0,228.2 397.4,221.4" fill="#f4f4f3" stroke="#dededd"/><polygon points="395.8,224.5 405.3,230.7 401.7,237.0 389.1,231.0" fill="#f2f2f2" stroke="#dededd"/><polygon points="387.7,233.4 400.5,239.8 396.6,250.0 383.4,244.3" fill="#f3f3f2" stroke="#dededd"/><polygon points="381.9,247.4 395.3,252.6 386.8,261.2 376.8,255.1" fill="#f3f3f2" stroke="#dededd"/><polygon points="375.1,257.9 384.8,264.2 381.0,273.5 370.7,266.3" fill="#f3f3f2" stroke="#dededd"/><polygon points="369.1,269.0 379.4,276.0 374.1,282.8 365.4,276.2" fill="#f1f1f0" stroke="#dededd"/><polygon points="363.5,278.7 372.4,285.9 370.3,296.1 358.2,289.4" fill="#f4f4f3" stroke="#dededd"/><polygon points="356.6,292.4 368.8,298.7 361.2,306.0 351.5,300.9" fill="#f3f3f2" stroke="#dededd"/><polygon points="349.7,303.8 359.2,308.8 354.0,316.2 343.5,310.5" fill="#f2f2f1" stroke="#dededd"/><polygon points="342.0,313.0 352.3,319.1 349.3,327.1 337.6,322.8" fill="#f1f1f0" stroke="#dededd"/><polygon points="336.3,325.8 348.2,330.1 344.1,341.1 331.2,334.5" fill="#f2f2f2" stroke="#dededd"/><polygon points="329.9,337.2 342.7,343.6 335.8,352.1 327.4,344.3" fill="#f3f3f2" stroke="#dededd"/><polygon points="325.3,346.9 333.9,354.8 328.9,362.9 319.4,355.8" fill="#f1f1f0" stroke="#dededd"/><polygon points="443.7,174.6 454.5,182.3 450.4,190.9 438.1,185.7" fill="#f3f3f2" stroke="#dededd"/><polygon points="436.5,188.8 448.9,193.5 440.9,201.6 429.6,194.5" fill="#f1f1f0" stroke="#dededd"/><polygon points="428.2,196.8 439.0,204.3 437.4,212.9 423.6,206.2" fill="#f4f4f3" stroke="#dededd"/><polygon points="422.1,208.9 436.3,215.3 427.3,223.3 416.3,217.4" fill="#f2f2f2" stroke="#dededd"/><polygon points="414.8,220.1 425.4,226.3 421.5,234.8 410.4,230.0" fill="#f3f3f2" stroke="#dededd"/><polygon points="409.1,233.0 420.0,237.6 414.7,246.8 405.6,239.2" fill="#f2f2f2" stroke="#dededd"/><polygon points="403.9,241.7 412.9,249.6 410.3,259.2 400.4,251.8" fill="#f4f4f3" stroke="#dededd"/><polygon points="398.5,254.8 408.7,261.8 404.7,269.2 390.0,263.5" fill="#f1f1f0" stroke="#dededd"/><polygon points="388.6,266.0 403.4,271.8 395.1,280.9 384.5,275.4" fill="#f2f2f1" stroke="#dededd"/><polygon points="383.1,278.3 393.3,283.6 389.3,290.3 377.5,285.0" fill="#f2f2f2" stroke="#dededd"/><polygon points="376.2,287.5 388.1,293.1 383.3,301.3 373.8,297.5" fill="#f2f2f2" stroke="#dededd"/><polygon points="372.2,300.9 382.0,304.5 378.1,316.6 364.4,308.2" fill="#f1f1f0" stroke="#dededd"/><polygon points="363.0,310.8 376.5,318.9 370.2,324.8 357.5,318.5" fill="#f1f1f0" stroke="#dededd"/><polygon points="356.1,320.9 368.8,327.5 364.0,338.3 353.2,329.2" fill="#f2f2f1" stroke="#dededd"/><polygon points="351.4,331.8 362.3,340.8 356.7,348.9 347.8,342.8" fill="#f2f2f2" stroke="#dededd"/><polygon points="345.9,345.9 354.8,351.9 351.3,360.7 339.0,354.3" fill="#f2f2f1" stroke="#dededd"/><polygon points="337.6,357.0 349.8,363.3 344.7,371.0 332.1,365.1" fill="#f2f2f1" stroke="#dededd"/><polygon points="330.7,367.7 343.3,373.7 337.7,383.3 325.6,376.1" fill="#f1f1f0" stroke="#dededd"/><polygon points="452.2,195.7 462.7,202.7 457.6,210.9 444.2,203.9" fill="#f2f2f1" stroke="#dededd"/><polygon points="442.9,206.3 456.0,213.5 450.4,222.0 441.4,214.8" fill="#f2f2f2" stroke="#dededd"/><polygon points="439.4,217.6 448.6,224.6 444.2,232.4 430.6,225.6" fill="#f3f3f2" stroke="#dededd"/><polygon points="429.3,228.1 442.7,235.0 437.1,242.6 425.2,236.8" fill="#f2f2f2" stroke="#dededd"/><polygon points="423.7,239.5 435.8,245.5 431.2,256.4 418.1,248.9" fill="#f1f1f0" stroke="#dededd"/><polygon points="416.8,251.5 429.7,258.9 424.5,265.1 413.8,261.0" fill="#f1f1f0" stroke="#dededd"/><polygon points="412.4,264.0 423.2,268.1 418.3,279.0 408.6,271.2" fill="#f2f2f1" stroke="#dededd"/><polygon points="406.5,274.0 416.5,281.6 410.3,289.7 398.4,283.1" fill="#f1f1f0" stroke="#dededd"/><polygon points="397.0,285.7 408.4,292.4 403.6,301.1 393.2,292.6" fill="#f2f2f2" stroke="#dededd"/><polygon points="391.6,295.0 402.0,303.4 398.7,310.4 387.1,303.5" fill="#f2f2f1" stroke="#dededd"/><polygon points="385.4,306.1 397.3,313.2 391.5,321.9 381.5,318.0" fill="#f2f2f2" stroke="#dededd"/><polygon points="380.1,321.4 389.9,325.1 386.0,336.4 374.0,327.2" fill="#f1f1f0" stroke="#dededd"/><polygon points="372.4,329.5 384.3,338.8 379.8,346.3 367.5,340.2" fill="#f1f1f0" stroke="#dededd"/><polygon points="366.0,343.1 378.4,348.9 371.5,355.7 360.0,351.0" fill="#f3f3f2" stroke="#dededd"/><polygon points="358.5,353.7 369.9,358.8 364.9,368.0 354.9,362.4" fill="#f2f2f1" stroke="#dededd"/><polygon points="353.5,365.4 363.3,370.9 361.1,379.4 348.5,373.0" fill="#f4f4f3" stroke="#dededd"/><polygon points="346.8,375.7 359.8,382.0 351.7,390.7 341.3,385.2" fill="#f3f3f2" stroke="#dededd"/><polygon points="339.7,388.1 349.8,393.6 345.8,402.5 334.6,394.7" fill="#f1f1f0" stroke="#dededd"/><polygon points="333.0,397.1 344.2,405.1 340.8,412.6 328.1,407.5" fill="#f3f3f2" stroke="#dededd"/><polygon points="459.5,215.8 470.6,221.4 464.5,231.3 453.8,224.1" fill="#f2f2f2" stroke="#dededd"/><polygon points="452.2,226.8 462.6,233.9 457.5,242.1 447.9,234.7" fill="#f3f3f2" stroke="#dededd"/><polygon points="446.1,237.2 455.8,244.4 451.1,250.2 440.9,244.8" fill="#f2f2f1" stroke="#dededd"/><polygon points="439.3,247.4 449.6,253.3 446.5,263.0 434.8,258.0" fill="#f2f2f1" stroke="#dededd"/><polygon points="433.4,261.1 445.2,265.8 439.2,275.5 428.3,267.4" fill="#f2f2f2" stroke="#dededd"/><polygon points="426.6,269.9 437.4,278.2 433.4,287.1 421.6,280.9" fill="#f3f3f2" stroke="#dededd"/><polygon points="420.1,283.9 431.9,289.8 426.4,298.5 413.6,291.9" fill="#f4f4f3" stroke="#dededd"/><polygon points="412.2,294.5 424.9,301.1 419.7,309.1 407.1,303.2" fill="#f4f4f3" stroke="#dededd"/><polygon points="405.9,305.8 418.4,311.7 413.5,320.7 402.5,312.7" fill="#f1f1f0" stroke="#dededd"/><polygon points="400.7,315.2 411.9,323.0 405.9,329.8 395.0,324.1" fill="#f2f2f1" stroke="#dededd"/><polygon points="393.3,326.8 404.4,332.9 399.5,343.5 389.4,337.9" fill="#f3f3f2" stroke="#dededd"/><polygon points="381.8,351.1 390.4,356.7 387.5,366.2 375.1,358.1" fill="#f3f3f2" stroke="#dededd"/><polygon points="373.5,360.5 386.0,368.7 381.9,377.9 368.5,370.2" fill="#f1f1f0" stroke="#dededd"/><polygon points="367.1,372.7 380.5,380.2 372.7,386.6 365.0,381.2" fill="#f2f2f1" stroke="#dededd"/><polygon points="363.0,384.1 370.8,389.7 368.5,398.2 354.9,392.8" fill="#f3f3f2" stroke="#dededd"/><polygon points="353.5,395.5 367.3,401.0 359.6,410.6 349.4,404.4" fill="#f4f4f3" stroke="#dededd"/><polygon points="348.1,407.2 357.7,413.4 356.6,421.5 344.8,414.6" fill="#f2f2f2" stroke="#dededd"/><polygon points="343.1,417.2 355.4,424.0 347.8,431.5 338.4,426.7" fill="#f1f1f0" stroke="#dededd"/><polygon points="336.5,429.8 345.8,434.4 340.8,443.4 329.6,435.9" fill="#f4f4f3" stroke="#dededd"/><polygon points="328.0,438.3 339.1,446.2 335.4,454.9 324.6,449.0" fill="#f4f4f3" stroke="#dededd"/><polygon points="459.5,246.9 471.8,252.9 464.9,261.5 454.7,252.8" fill="#f1f1f0" stroke="#dededd"/><polygon points="453.0,255.0 463.0,264.0 459.5,271.5 450.3,264.9" fill="#f2f2f2" stroke="#dededd"/><polygon points="448.3,267.8 458.0,274.4 452.6,284.4 442.5,277.4" fill="#f3f3f2" stroke="#dededd"/><polygon points="440.8,280.4 450.7,287.2 445.3,294.9 437.1,289.0" fill="#f2f2f1" stroke="#dededd"/><polygon points="435.3,291.9 443.4,297.9 440.9,306.8 430.0,300.5" fill="#f2f2f2" stroke="#dededd"/><polygon points="428.5,303.3 439.4,309.5 434.4,318.3 423.6,311.2" fill="#f2f2f1" stroke="#dededd"/><polygon points="421.9,313.8 432.8,320.8 427.0,326.5 417.0,322.5" fill="#f2f2f2" stroke="#dededd"/><polygon points="415.4,325.5 425.5,329.5 419.9,338.5 409.4,332.0" fill="#f2f2f2" stroke="#dededd"/><polygon points="407.7,334.7 418.2,341.5 412.9,350.8 402.9,345.3" fill="#f2f2f2" stroke="#dededd"/><polygon points="401.5,348.4 411.1,353.7 408.6,361.4 395.6,355.9" fill="#f2f2f1" stroke="#dededd"/><polygon points="394.2,358.5 407.5,364.1 400.2,372.8 391.1,367.8" fill="#f1f1f0" stroke="#dededd"/><polygon points="389.5,371.0 398.5,376.0 395.7,385.8 385.6,379.6" fill="#f4f4f3" stroke="#dededd"/><polygon points="374.6,391.5 386.5,399.7 383.6,408.3 372.4,400.3" fill="#f3f3f2" stroke="#dededd"/><polygon points="370.6,402.9 382.3,410.7 377.4,418.9 362.9,412.7" fill="#f4f4f3" stroke="#dededd"/><polygon points="361.7,415.3 376.0,421.5 368.7,430.2 360.6,423.4" fill="#f1f1f0" stroke="#dededd"/><polygon points="358.3,426.3 366.8,432.9 361.1,441.7 351.0,433.9" fill="#f3f3f2" stroke="#dededd"/><polygon points="349.3,436.5 359.0,444.5 356.9,454.4 344.3,445.7" fill="#f1f1f0" stroke="#dededd"/><polygon points="342.8,448.2 355.4,456.6 349.8,463.1 339.1,457.0" fill="#f1f1f0" stroke="#dededd"/><polygon points="337.4,459.7 348.2,465.7 342.4,473.9 331.6,466.8" fill="#f3f3f2" stroke="#dededd"/><polygon points="329.9,469.4 340.7,476.7 338.1,485.9 323.5,479.2" fill="#f4f4f3" stroke="#dededd"/><polygon points="467.0,266.2 480.3,271.0 474.9,280.9 463.1,273.7" fill="#f2f2f1" stroke="#dededd"/><polygon points="461.5,276.3 473.4,283.5 468.1,290.6 455.8,286.4" fill="#f1f1f0" stroke="#dededd"/><polygon points="454.5,289.3 466.8,293.5 461.7,303.2 448.6,297.0" fill="#f2f2f1" stroke="#dededd"/><polygon points="447.3,299.6 460.3,306.1 456.5,316.5 444.6,308.8" fill="#f2f2f1" stroke="#dededd"/><polygon points="442.9,311.6 455.0,318.9 447.3,325.8 437.9,320.4" fill="#f2f2f2" stroke="#dededd"/><polygon points="436.4,323.2 445.4,328.6 443.2,336.4 430.6,329.0" fill="#f1f1f0" stroke="#dededd"/><polygon points="429.0,331.4 442.0,338.9 434.8,348.6 423.3,340.7" fill="#f2f2f2" stroke="#dededd"/><polygon points="421.6,343.4 433.0,351.3 427.5,359.2 416.2,352.9" fill="#f4f4f3" stroke="#dededd"/><polygon points="414.9,355.5 425.8,361.9 423.0,370.2 412.6,363.3" fill="#f2f2f1" stroke="#dededd"/><polygon points="410.8,366.1 421.6,372.9 416.3,382.5 403.5,375.0" fill="#f1f1f0" stroke="#dededd"/><polygon points="402.1,377.6 414.6,385.3 410.4,395.3 399.3,387.8" fill="#f3f3f2" stroke="#dededd"/><polygon points="397.7,390.6 408.8,397.8 403.6,405.5 391.7,399.4" fill="#f4f4f3" stroke="#dededd"/><polygon points="385.7,413.1 393.4,418.4 391.2,428.2 381.2,420.9" fill="#f2f2f2" stroke="#dededd"/><polygon points="379.2,423.7 389.6,430.7 382.9,437.1 372.0,432.3" fill="#f2f2f2" stroke="#dededd"/><polygon points="370.3,435.1 381.2,440.3 376.3,450.5 364.2,443.8" fill="#f2f2f2" stroke="#dededd"/><polygon points="362.9,446.5 374.7,453.2 370.6,459.4 360.5,456.0" fill="#f3f3f2" stroke="#dededd"/><polygon points="359.1,459.1 369.5,462.4 365.5,473.4 353.4,465.3" fill="#f2f2f1" stroke="#dededd"/><polygon points="351.8,467.9 363.9,475.9 358.2,484.3 345.8,476.3" fill="#f4f4f3" stroke="#dededd"/><polygon points="344.3,478.7 356.5,486.8 349.9,493.4 342.0,487.7" fill="#f2f2f1" stroke="#dededd"/><polygon points="340.0,490.6 348.1,496.5 345.7,506.3 332.9,498.6" fill="#f2f2f1" stroke="#dededd"/><polygon points="331.4,501.1 344.2,508.9 339.8,517.5 326.4,510.8" fill="#f3f3f2" stroke="#dededd"/><polygon points="325.1,513.4 338.5,520.1 333.2,530.5 322.8,521.8" fill="#f3f3f2" stroke="#dededd"/><polygon points="458.4,321.3 468.0,325.7 463.8,334.3 450.6,328.1" fill="#f3f3f2" stroke="#dededd"/><polygon points="449.4,330.5 462.4,336.9 457.7,345.1 447.2,338.4" fill="#f2f2f2" stroke="#dededd"/><polygon points="445.2,341.1 456.3,347.9 449.8,357.5 438.1,350.7" fill="#f2f2f2" stroke="#dededd"/><polygon points="436.7,353.5 448.0,360.3 445.3,369.7 431.0,361.5" fill="#f4f4f3" stroke="#dededd"/><polygon points="429.6,363.9 444.0,372.0 436.7,380.4 426.8,372.4" fill="#f2f2f1" stroke="#dededd"/><polygon points="424.9,375.0 434.9,383.0 429.8,391.0 419.8,384.5" fill="#f3f3f2" stroke="#dededd"/><polygon points="418.3,387.3 428.1,393.8 425.7,401.2 413.9,397.0" fill="#f1f1f0" stroke="#dededd"/><polygon points="412.6,399.9 424.6,404.0 419.2,412.8 407.2,407.5" fill="#f4f4f3" stroke="#dededd"/><polygon points="405.5,410.3 417.7,415.5 410.5,425.2 398.4,417.6" fill="#f2f2f1" stroke="#dededd"/><polygon points="397.0,420.0 408.7,427.8 405.0,435.2 394.7,430.0" fill="#f3f3f2" stroke="#dededd"/><polygon points="393.0,433.1 403.6,438.0 398.9,448.8 386.3,439.6" fill="#f4f4f3" stroke="#dededd"/><polygon points="384.8,442.0 397.2,451.2 393.4,459.1 379.9,452.6" fill="#f2f2f2" stroke="#dededd"/><polygon points="378.5,455.2 392.1,461.5 384.5,470.3 374.6,461.7" fill="#f2f2f2" stroke="#dededd"/><polygon points="372.9,464.0 382.5,473.0 381.3,480.7 369.0,475.2" fill="#f2f2f1" stroke="#dededd"/><polygon points="367.6,478.2 380.1,483.4 374.3,493.1 361.7,486.4" fill="#f4f4f3" stroke="#dededd"/><polygon points="360.2,489.1 372.7,495.5 366.2,502.0 353.2,495.8" fill="#f2f2f2" stroke="#dededd"/><polygon points="351.9,498.2 364.8,504.8 360.6,514.7 349.4,508.1" fill="#f1f1f0" stroke="#dededd"/><polygon points="347.9,511.1 359.2,517.4 354.1,525.8 343.7,519.4" fill="#f4f4f3" stroke="#dededd"/><polygon points="341.9,522.2 352.5,528.6 346.9,536.5 336.6,532.2" fill="#f2f2f1" stroke="#dededd"/><polygon points="335.1,535.3 345.3,539.5 341.7,549.8 328.6,541.2" fill="#f2f2f1" stroke="#dededd"/><polygon points="327.1,543.5 340.2,552.0 335.5,559.3 322.1,551.5" fill="#f4f4f3" stroke="#dededd"/><polygon points="471.7,327.6 483.6,335.5 478.3,342.1 467.5,336.4" fill="#f2f2f2" stroke="#dededd"/><polygon points="465.9,339.1 476.8,344.8 470.6,352.4 461.4,347.0" fill="#f3f3f2" stroke="#dededd"/><polygon points="459.5,350.0 468.8,355.5 463.9,364.3 453.1,359.4" fill="#f4f4f3" stroke="#dededd"/><polygon points="451.8,362.3 462.2,367.3 457.7,374.6 449.1,371.1" fill="#f4f4f3" stroke="#dededd"/><polygon points="447.4,374.4 456.3,378.0 453.4,388.5 440.1,382.4" fill="#f2f2f2" stroke="#dededd"/><polygon points="438.7,385.2 452.0,391.1 445.2,400.0 433.2,393.2" fill="#f2f2f2" stroke="#dededd"/><polygon points="431.9,395.7 443.6,402.6 439.3,411.6 429.7,403.4" fill="#f2f2f2" stroke="#dededd"/><polygon points="427.9,405.9 437.7,414.0 433.0,421.3 422.9,414.8" fill="#f4f4f3" stroke="#dededd"/><polygon points="420.8,417.6 431.3,424.2 424.2,432.9 413.8,427.2" fill="#f3f3f2" stroke="#dededd"/><polygon points="412.3,430.0 422.2,435.9 418.2,444.5 408.8,437.3" fill="#f2f2f1" stroke="#dededd"/><polygon points="407.0,439.9 416.6,447.3 412.8,456.0 402.3,450.5" fill="#f2f2f2" stroke="#dededd"/><polygon points="401.0,453.6 411.2,458.9 406.8,466.7 397.2,461.0" fill="#f3f3f2" stroke="#dededd"/><polygon points="395.4,463.8 405.2,469.5 400.3,476.3 387.7,472.3" fill="#f3f3f2" stroke="#dededd"/><polygon points="386.6,474.9 398.9,479.2 393.6,487.2 385.2,482.3" fill="#f3f3f2" stroke="#dededd"/><polygon points="383.3,485.4 392.1,490.4 388.0,499.6 377.8,494.8" fill="#f1f1f0" stroke="#dededd"/><polygon points="368.3,506.7 380.1,514.5 373.8,521.3 364.3,516.5" fill="#f2f2f1" stroke="#dededd"/><polygon points="356.1,530.6 367.3,539.0 363.2,545.4 350.4,538.9" fill="#f2f2f2" stroke="#dededd"/><polygon points="348.9,541.3 361.9,548.0 353.7,555.5 345.3,551.4" fill="#f1f1f0" stroke="#dededd"/><polygon points="343.6,554.6 351.7,558.8 347.7,568.1 339.3,561.3" fill="#f2f2f2" stroke="#dededd"/><polygon points="337.2,564.1 345.8,571.1 342.2,580.2 330.1,573.8" fill="#f3f3f2" stroke="#dededd"/><polygon points="328.7,576.6 340.6,582.9 336.4,591.0 324.4,584.8" fill="#f4f4f3" stroke="#dededd"/><polygon points="480.4,346.9 492.4,353.1 487.5,364.8 473.9,354.9" fill="#f4f4f3" stroke="#dededd"/><polygon points="466.0,369.0 479.5,376.4 473.0,383.6 461.4,376.9" fill="#f2f2f2" stroke="#dededd"/><polygon points="459.8,379.4 471.5,386.6 467.8,397.8 457.1,390.2" fill="#f2f2f2" stroke="#dededd"/><polygon points="455.4,393.2 466.2,400.3 460.6,406.5 448.8,402.0" fill="#f4f4f3" stroke="#dededd"/><polygon points="447.3,404.7 459.2,409.6 454.7,420.3 442.8,413.5" fill="#f3f3f2" stroke="#dededd"/><polygon points="441.4,416.3 453.1,422.8 449.0,431.1 436.4,423.7" fill="#f2f2f2" stroke="#dededd"/><polygon points="434.8,426.2 447.6,433.6 442.2,442.3 427.3,435.3" fill="#f2f2f1" stroke="#dededd"/><polygon points="426.2,437.7 440.8,444.8 436.0,452.2 421.8,446.6" fill="#f2f2f2" stroke="#dededd"/><polygon points="420.5,449.2 435.0,454.8 427.7,464.8 416.3,458.0" fill="#f1f1f0" stroke="#dededd"/><polygon points="414.8,460.8 426.0,467.6 421.5,477.0 410.4,469.0" fill="#f2f2f1" stroke="#dededd"/><polygon points="408.9,471.5 419.9,479.3 415.7,486.2 404.0,478.7" fill="#f1f1f0" stroke="#dededd"/><polygon points="402.4,481.1 414.2,488.8 409.0,499.2 397.2,489.6" fill="#f1f1f0" stroke="#dededd"/><polygon points="395.5,492.0 407.2,501.5 402.5,509.8 391.5,501.9" fill="#f3f3f2" stroke="#dededd"/><polygon points="389.8,504.5 400.9,512.2 394.8,517.7 385.3,513.9" fill="#f2f2f1" stroke="#dededd"/><polygon points="383.6,516.9 393.2,520.8 388.4,530.4 377.3,523.5" fill="#f2f2f1" stroke="#dededd"/><polygon points="375.7,526.1 386.8,533.4 383.8,542.7 372.3,538.2" fill="#f1f1f0" stroke="#dededd"/><polygon points="371.1,541.4 382.5,545.4 375.3,551.5 367.1,547.3" fill="#f2f2f2" stroke="#dededd"/><polygon points="365.1,550.2 373.6,554.8 371.7,565.7 356.8,557.8" fill="#f1f1f0" stroke="#dededd"/><polygon points="355.4,560.4 370.3,568.2 362.0,577.1 350.9,570.3" fill="#f4f4f3" stroke="#dededd"/><polygon points="349.5,573.0 360.1,580.0 358.2,588.4 345.7,582.2" fill="#f1f1f0" stroke="#dededd"/><polygon points="344.4,584.9 357.0,590.9 350.7,598.9 340.3,593.0" fill="#f2f2f1" stroke="#dededd"/><polygon points="495.6,355.2 503.6,362.8 500.6,369.7 490.9,366.3" fill="#f2f2f2" stroke="#dededd"/><polygon points="489.5,369.7 499.3,372.9 494.4,383.6 484.7,376.1" fill="#f2f2f2" stroke="#dededd"/><polygon points="482.8,378.9 492.6,386.2 488.4,395.0 476.6,386.1" fill="#f2f2f1" stroke="#dededd"/><polygon points="475.0,388.4 486.7,397.5 482.2,405.4 471.3,399.6" fill="#f4f4f3" stroke="#dededd"/><polygon points="469.8,402.6 480.7,408.1 475.1,416.2 464.3,408.9" fill="#f1f1f0" stroke="#dededd"/><polygon points="462.5,411.4 473.4,418.8 467.7,425.2 458.2,421.8" fill="#f2f2f1" stroke="#dededd"/><polygon points="456.9,425.0 466.2,428.7 464.4,438.9 452.7,432.9" fill="#f2f2f1" stroke="#dededd"/><polygon points="451.1,435.8 463.1,441.6 455.4,449.3 446.0,444.2" fill="#f1f1f0" stroke="#dededd"/><polygon points="423.7,481.7 433.4,485.6 431.0,496.6 419.4,488.4" fill="#f2f2f2" stroke="#dededd"/><polygon points="417.6,491.0 429.5,499.1 422.1,505.7 412.4,501.1" fill="#f2f2f1" stroke="#dededd"/><polygon points="410.8,504.0 420.2,508.7 415.4,516.2 406.0,511.7" fill="#f1f1f0" stroke="#dededd"/><polygon points="404.3,514.7 413.8,519.2 409.0,529.7 398.3,520.3" fill="#f1f1f0" stroke="#dededd"/><polygon points="396.5,522.6 407.2,532.2 403.1,541.3 391.9,532.7" fill="#f3f3f2" stroke="#dededd"/><polygon points="390.3,535.2 401.4,543.8 396.9,551.9 387.7,544.7" fill="#f4f4f3" stroke="#dededd"/><polygon points="385.6,547.6 395.2,554.4 388.7,562.3 378.7,554.1" fill="#f3f3f2" stroke="#dededd"/><polygon points="377.1,556.4 386.7,565.1 384.8,573.7 375.4,567.2" fill="#f2f2f2" stroke="#dededd"/><polygon points="373.5,570.5 383.3,576.5 378.5,586.9 365.3,579.3" fill="#f2f2f2" stroke="#dededd"/><polygon points="364.1,581.8 376.8,589.2 370.7,594.1 362.2,590.1" fill="#f4f4f3" stroke="#dededd"/><polygon points="507.6,364.6 521.8,371.6 516.1,379.0 504.3,372.0" fill="#f1f1f0" stroke="#dededd"/><polygon points="502.7,374.4 514.7,381.7 509.6,390.8 497.7,385.4" fill="#f2f2f2" stroke="#dededd"/><polygon points="496.4,388.4 508.1,393.7 502.9,402.2 491.8,396.9" fill="#f3f3f2" stroke="#dededd"/><polygon points="490.4,399.8 501.5,404.9 495.8,412.3 485.8,407.4" fill="#f2f2f1" stroke="#dededd"/><polygon points="484.2,410.2 494.2,415.2 490.1,423.2 478.6,418.2" fill="#f2f2f2" stroke="#dededd"/><polygon points="469.6,430.0 480.0,438.4 476.2,447.3 468.2,440.5" fill="#f4f4f3" stroke="#dededd"/><polygon points="466.3,443.8 474.5,450.2 471.5,459.6 458.5,451.7" fill="#f4f4f3" stroke="#dededd"/><polygon points="457.1,454.2 470.0,462.1 463.6,470.5 454.5,462.8" fill="#f2f2f2" stroke="#dededd"/><polygon points="452.6,465.4 461.7,473.1 458.3,479.8 447.3,475.2" fill="#f3f3f2" stroke="#dededd"/><polygon points="437.0,487.0 450.5,495.4 444.3,504.0 434.6,498.3" fill="#f2f2f2" stroke="#dededd"/><polygon points="432.8,501.5 442.6,506.9 438.0,516.4 425.3,508.2" fill="#f1f1f0" stroke="#dededd"/><polygon points="423.9,510.5 436.3,518.7 432.2,525.4 418.9,518.6" fill="#f2f2f2" stroke="#dededd"/><polygon points="417.4,521.0 431.0,528.1 425.1,538.3 412.3,531.6" fill="#f3f3f2" stroke="#dededd"/><polygon points="410.9,534.5 423.6,540.9 416.4,547.9 406.6,543.3" fill="#f2f2f1" stroke="#dededd"/><polygon points="405.1,546.1 414.8,551.0 412.0,560.6 400.4,554.0" fill="#f1f1f0" stroke="#dededd"/><polygon points="398.8,556.7 410.6,563.1 405.2,570.3 391.9,564.6" fill="#f2f2f1" stroke="#dededd"/><polygon points="390.7,567.0 403.8,573.1 399.5,581.7 388.5,575.6" fill="#f3f3f2" stroke="#dededd"/><polygon points="386.9,578.4 398.2,584.5 394.0,593.3 381.9,588.6" fill="#f2f2f1" stroke="#dededd"/><polygon points="530.3,362.6 541.7,367.9 537.0,376.7 526.9,371.0" fill="#f3f3f2" stroke="#dededd"/><polygon points="525.2,374.1 535.5,379.4 529.0,387.4 519.9,381.1" fill="#f3f3f2" stroke="#dededd"/><polygon points="518.2,383.7 527.1,390.4 526.0,399.4 513.2,392.8" fill="#f3f3f2" stroke="#dededd"/><polygon points="511.7,395.6 524.8,402.1 518.8,412.3 506.6,404.3" fill="#f2f2f2" stroke="#dededd"/><polygon points="505.0,406.9 517.1,414.7 511.5,422.6 499.3,414.7" fill="#f1f1f0" stroke="#dededd"/><polygon points="497.8,417.1 509.8,425.1 504.4,433.3 493.9,425.4" fill="#f4f4f3" stroke="#dededd"/><polygon points="492.1,428.0 502.7,436.1 499.2,446.1 485.2,437.8" fill="#f4f4f3" stroke="#dededd"/><polygon points="483.7,440.4 497.7,448.6 491.3,456.9 479.6,449.6" fill="#f3f3f2" stroke="#dededd"/><polygon points="478.1,452.1 489.7,459.4 483.6,465.6 475.1,461.4" fill="#f4f4f3" stroke="#dededd"/><polygon points="473.2,464.5 482.0,468.7 476.9,477.4 466.8,472.4" fill="#f2f2f1" stroke="#dededd"/><polygon points="465.5,475.3 475.1,480.4 472.7,489.9 462.1,482.0" fill="#f2f2f1" stroke="#dededd"/><polygon points="460.3,484.5 471.2,492.3 465.3,498.5 455.7,494.5" fill="#f4f4f3" stroke="#dededd"/><polygon points="454.0,497.6 463.7,501.8 460.2,512.6 447.7,506.0" fill="#f3f3f2" stroke="#dededd"/><polygon points="446.2,508.8 458.7,515.4 452.5,523.7 441.5,518.3" fill="#f1f1f0" stroke="#dededd"/><polygon points="440.0,521.2 450.8,526.4 444.9,534.0 436.1,527.5" fill="#f2f2f1" stroke="#dededd"/><polygon points="434.2,530.1 443.1,537.1 439.2,546.9 428.7,540.1" fill="#f4f4f3" stroke="#dededd"/><polygon points="427.0,543.1 437.4,549.6 433.2,558.7 419.9,550.3" fill="#f4f4f3" stroke="#dededd"/><polygon points="418.6,552.6 431.7,561.1 427.9,568.7 415.8,562.5" fill="#f3f3f2" stroke="#dededd"/><polygon points="414.4,565.2 426.7,571.2 421.4,579.1 409.0,572.5" fill="#f4f4f3" stroke="#dededd"/><polygon points="407.5,575.0 420.0,581.7 413.3,590.8 403.3,583.7" fill="#f4f4f3" stroke="#dededd"/><polygon points="538.9,381.5 551.0,386.7 543.6,396.4 532.2,389.6" fill="#f2f2f1" stroke="#dededd"/><polygon points="531.0,392.2 541.8,399.3 540.5,408.0 529.9,401.2" fill="#f2f2f2" stroke="#dededd"/><polygon points="528.1,404.1 539.3,410.7 532.6,420.3 522.3,414.2" fill="#f1f1f0" stroke="#dededd"/><polygon points="520.6,417.2 530.6,423.0 524.8,428.8 515.0,424.6" fill="#f3f3f2" stroke="#dededd"/><polygon points="513.4,427.4 523.2,432.0 520.4,442.8 507.9,435.4" fill="#f4f4f3" stroke="#dededd"/><polygon points="506.5,438.1 519.0,445.4 514.3,454.4 502.9,448.0" fill="#f4f4f3" stroke="#dededd"/><polygon points="501.3,450.9 512.9,457.0 507.2,465.1 494.8,459.0" fill="#f3f3f2" stroke="#dededd"/><polygon points="493.5,461.6 505.6,467.7 501.3,475.6 487.1,468.1" fill="#f1f1f0" stroke="#dededd"/><polygon points="485.5,470.4 500.1,478.0 491.7,487.0 480.3,479.6" fill="#f1f1f0" stroke="#dededd"/><polygon points="478.8,482.3 489.9,489.8 485.4,498.3 476.4,491.7" fill="#f1f1f0" stroke="#dededd"/><polygon points="474.6,494.7 483.7,500.8 479.8,507.9 468.7,501.0" fill="#f3f3f2" stroke="#dededd"/><polygon points="467.1,503.4 478.2,510.6 472.9,518.4 463.7,514.1" fill="#f4f4f3" stroke="#dededd"/><polygon points="454.6,528.4 468.1,534.8 463.2,543.0 448.3,536.3" fill="#f2f2f1" stroke="#dededd"/><polygon points="446.9,538.8 462.0,545.5 453.9,554.3 442.6,548.8" fill="#f3f3f2" stroke="#dededd"/><polygon points="435.6,563.3 448.6,568.4 441.4,576.4 431.9,570.7" fill="#f3f3f2" stroke="#dededd"/><polygon points="430.2,573.4 439.6,579.1 435.0,586.3 425.1,581.0" fill="#f1f1f0" stroke="#dededd"/><polygon points="423.2,583.9 433.4,589.3 427.9,599.4 416.6,592.9" fill="#f3f3f2" stroke="#dededd"/><polygon points="526.8,433.6 537.2,441.0 534.9,450.4 524.1,444.4" fill="#f2f2f2" stroke="#dededd"/><polygon points="522.5,447.5 533.5,453.3 528.4,463.2 518.0,456.3" fill="#f1f1f0" stroke="#dededd"/><polygon points="516.3,459.2 526.7,465.8 521.4,472.4 510.8,467.2" fill="#f2f2f1" stroke="#dededd"/><polygon points="509.4,469.8 519.8,475.3 516.6,483.4 505.2,477.5" fill="#f1f1f0" stroke="#dededd"/><polygon points="503.4,480.3 515.3,486.0 507.3,492.7 495.0,489.0" fill="#f2f2f2" stroke="#dededd"/><polygon points="471.6,537.0 482.4,543.3 476.6,550.5 467.2,544.8" fill="#f2f2f1" stroke="#dededd"/><polygon points="465.1,547.7 474.8,553.3 468.7,560.7 457.3,556.2" fill="#f2f2f1" stroke="#dededd"/><polygon points="451.9,570.6 462.9,576.3 455.7,584.9 444.8,578.6" fill="#f2f2f2" stroke="#dededd"/><polygon points="443.1,581.3 453.7,587.6 448.3,595.5 438.6,588.6" fill="#f4f4f3" stroke="#dededd"/><polygon points="470.5,565.6 481.1,573.0 476.8,580.7 468.0,575.3" fill="#f2f2f1" stroke="#dededd"/><polygon points="466.1,578.4 475.3,583.7 471.2,593.6 458.9,587.0" fill="#f2f2f2" stroke="#dededd"/><polygon points="226.1,20.1 235.4,22.3 232.7,31.5 224.5,27.7" fill="#f4f4f3" stroke="#e5e5e4"/><polygon points="239.0,23.4 248.8,28.7 246.9,37.1 236.3,32.9" fill="#f3f3f2" stroke="#e5e5e4"/><polygon points="235.5,35.8 245.7,39.9 244.1,47.4 234.5,42.0" fill="#f5f5f4" stroke="#e5e5e4"/><polygon points="257.3,19.7 265.9,22.5 262.9,31.0 253.7,27.1" fill="#f5f5f4" stroke="#e5e5e4"/><polygon points="252.6,30.1 261.5,34.1 259.3,40.5 250.6,38.3" fill="#f5f5f4" stroke="#e5e5e4"/><polygon points="249.8,41.5 258.5,43.8 257.2,51.7 248.0,48.5" fill="#f5f5f4" stroke="#e5e5e4"/><polygon points="246.8,51.8 256.3,54.6 252.3,61.9 242.0,58.1" fill="#f3f3f2" stroke="#e5e5e4"/><polygon points="272.7,12.6 282.2,17.6 280.0,25.4 270.8,20.7" fill="#f3f3f2" stroke="#e5e5e4"/><polygon points="269.5,23.7 278.8,28.3 276.5,34.3 266.4,32.3" fill="#f5f5f4" stroke="#e5e5e4"/><polygon points="262.2,44.9 270.6,47.9 267.9,54.0 261.0,52.5" fill="#f5f5f4" stroke="#e5e5e4"/><polygon points="260.0,56.1 267.1,57.6 266.4,66.5 256.0,63.3" fill="#f4f4f3" stroke="#e5e5e4"/><polygon points="289.2,8.6 300.6,13.0 298.1,20.8 287.2,16.4" fill="#f3f3f2" stroke="#e5e5e4"/><polygon points="286.2,19.2 297.1,23.4 292.2,28.4 283.7,26.8" fill="#f5f5f4" stroke="#e5e5e4"/><polygon points="282.9,29.7 291.2,31.7 289.7,39.0 280.6,35.6" fill="#f3f3f2" stroke="#e5e5e4"/><polygon points="279.4,38.6 288.8,42.0 286.5,51.3 275.6,46.2" fill="#f4f4f3" stroke="#e5e5e4"/><polygon points="274.5,49.1 285.2,53.8 281.1,59.8 271.8,55.8" fill="#f5f5f4" stroke="#e5e5e4"/><polygon points="304.7,14.5 313.8,15.7 310.8,23.7 302.0,21.8" fill="#f4f4f3" stroke="#e5e5e4"/><polygon points="300.9,25.2 309.7,26.7 306.0,34.6 296.1,30.2" fill="#f3f3f2" stroke="#e5e5e4"/><polygon points="295.1,32.7 304.6,37.5 303.7,43.8 293.7,40.3" fill="#f5f5f4" stroke="#e5e5e4"/><polygon points="292.6,43.3 302.9,46.6 298.3,53.0 290.1,52.2" fill="#f3f3f2" stroke="#e5e5e4"/><polygon points="289.2,55.7 297.3,56.4 294.6,65.1 284.9,61.3" fill="#f3f3f2" stroke="#e5e5e4"/><polygon points="313.4,28.1 323.0,30.6 319.0,38.8 309.6,36.0" fill="#f5f5f4" stroke="#e5e5e4"/><polygon points="306.3,48.2 314.0,50.8 311.5,59.8 302.2,54.7" fill="#f3f3f2" stroke="#e5e5e4"/><polygon points="321.7,43.2 332.7,47.7 328.7,52.6 319.0,49.4" fill="#f5f5f4" stroke="#e5e5e4"/><polygon points="351.5,36.4 357.3,39.9 355.6,46.6 348.3,41.0" fill="#f3f3f2" stroke="#e5e5e4"/><polygon points="366.7,31.8 373.1,36.2 370.8,43.3 362.4,38.8" fill="#f3f3f2" stroke="#e5e5e4"/><polygon points="357.5,51.5 365.0,53.7 360.2,60.2 352.6,55.4" fill="#f4f4f3" stroke="#e5e5e4"/><polygon points="380.8,30.0 387.6,32.8 383.9,39.3 378.2,35.1" fill="#f5f5f4" stroke="#e5e5e4"/><polygon points="376.6,38.0 382.0,42.5 381.2,48.3 374.3,44.8" fill="#f5f5f4" stroke="#e5e5e4"/><polygon points="373.0,48.0 379.9,51.1 377.4,56.2 370.1,52.7" fill="#f3f3f2" stroke="#e5e5e4"/><polygon points="368.4,55.6 376.1,59.0 371.9,64.5 363.5,62.0" fill="#f3f3f2" stroke="#e5e5e4"/><polygon points="385.9,44.0 393.5,47.5 390.6,52.3 384.9,49.8" fill="#f3f3f2" stroke="#e5e5e4"/><polygon points="383.3,53.1 389.3,55.5 385.8,62.1 381.2,57.9" fill="#f4f4f3" stroke="#e5e5e4"/><polygon points="407.8,30.8 414.8,34.8 411.3,41.5 404.8,36.7" fill="#f4f4f3" stroke="#e5e5e4"/><polygon points="403.0,39.6 409.5,44.4 407.6,49.6 398.6,46.4" fill="#f3f3f2" stroke="#e5e5e4"/><polygon points="397.4,49.2 406.3,52.4 403.2,59.3 394.3,54.4" fill="#f3f3f2" stroke="#e5e5e4"/><polygon points="423.6,29.6 430.8,33.0 426.8,38.3 420.0,34.0" fill="#f5f5f4" stroke="#e5e5e4"/><polygon points="418.2,36.6 425.0,41.3 423.0,47.8 414.6,43.5" fill="#f5f5f4" stroke="#e5e5e4"/><polygon points="413.3,46.3 421.5,50.3 416.8,54.9 411.5,51.5" fill="#f4f4f3" stroke="#e5e5e4"/><polygon points="409.6,54.3 414.9,58.1 412.5,63.3 406.9,60.7" fill="#f4f4f3" stroke="#e5e5e4"/><polygon points="428.7,43.1 436.0,47.8 433.4,52.1 426.7,49.4" fill="#f3f3f2" stroke="#e5e5e4"/><polygon points="424.9,52.6 432.1,54.9 427.2,60.2 420.0,57.0" fill="#f5f5f4" stroke="#e5e5e4"/><polygon points="439.7,50.0 447.0,53.5 442.9,57.6 437.3,54.2" fill="#f3f3f2" stroke="#e5e5e4"/><polygon points="539.8,566.8 547.6,563.5 550.9,568.6 543.9,573.1" fill="#f1f1f0" stroke="#dededd"/><polygon points="545.6,575.9 552.6,571.4 557.3,577.0 548.0,582.3" fill="#f3f3f2" stroke="#dededd"/><polygon points="549.4,584.8 558.6,579.4 559.2,586.3 552.8,590.1" fill="#f2f2f2" stroke="#dededd"/><polygon points="554.2,592.9 560.8,589.4 565.1,594.0 556.8,598.7" fill="#f2f2f2" stroke="#dededd"/><polygon points="530.1,525.4 539.1,520.6 542.0,528.2 533.1,533.0" fill="#f3f3f2" stroke="#dededd"/><polygon points="534.6,535.6 543.3,531.1 546.5,537.6 538.3,541.0" fill="#f3f3f2" stroke="#dededd"/><polygon points="539.6,543.7 548.0,540.5 553.1,545.5 543.8,549.3" fill="#f4f4f3" stroke="#dededd"/><polygon points="545.2,552.1 554.4,548.0 555.7,553.7 549.5,558.6" fill="#f2f2f2" stroke="#dededd"/><polygon points="551.2,561.3 557.6,556.5 561.7,562.9 554.4,566.5" fill="#f3f3f2" stroke="#dededd"/><polygon points="556.1,569.3 563.2,565.8 565.3,570.4 560.4,574.7" fill="#f1f1f0" stroke="#dededd"/><polygon points="562.4,577.8 567.2,573.2 571.5,579.1 562.9,584.6" fill="#f3f3f2" stroke="#dededd"/><polygon points="564.3,587.1 573.1,581.8 577.9,588.4 568.8,591.8" fill="#f1f1f0" stroke="#dededd"/><polygon points="530.6,502.0 538.9,498.4 542.7,504.9 534.9,509.0" fill="#f2f2f2" stroke="#dededd"/><polygon points="536.7,511.6 544.2,507.8 548.4,512.3 541.2,515.9" fill="#f4f4f3" stroke="#dededd"/><polygon points="542.8,518.9 550.1,514.9 554.9,520.9 545.6,526.4" fill="#f1f1f0" stroke="#dededd"/><polygon points="547.1,529.0 556.3,523.5 558.9,529.3 550.1,535.8" fill="#f2f2f1" stroke="#dededd"/><polygon points="551.6,538.1 560.5,531.7 562.7,538.0 556.4,543.3" fill="#f3f3f2" stroke="#dededd"/><polygon points="558.3,546.0 564.6,540.6 569.3,547.4 559.6,551.8" fill="#f4f4f3" stroke="#dededd"/><polygon points="560.9,554.3 570.5,550.0 571.8,555.3 565.1,561.0" fill="#f4f4f3" stroke="#dededd"/><polygon points="566.9,563.5 573.6,557.9 578.8,564.7 569.2,568.4" fill="#f3f3f2" stroke="#dededd"/><polygon points="576.6,579.7 585.0,575.1 588.0,580.9 581.1,586.3" fill="#f1f1f0" stroke="#dededd"/><polygon points="583.0,589.1 589.8,583.6 594.6,590.6 584.6,596.3" fill="#f4f4f3" stroke="#dededd"/><polygon points="532.4,477.8 540.1,474.7 544.7,480.3 536.6,484.6" fill="#f2f2f2" stroke="#dededd"/><polygon points="538.3,487.5 546.3,483.1 550.5,489.3 541.1,493.7" fill="#f2f2f1" stroke="#dededd"/><polygon points="542.5,496.3 551.8,492.0 555.4,497.4 546.3,503.1" fill="#f1f1f0" stroke="#dededd"/><polygon points="547.8,505.4 556.7,499.8 558.2,505.4 551.9,510.0" fill="#f3f3f2" stroke="#dededd"/><polygon points="553.5,512.9 560.2,508.1 563.5,515.3 557.9,518.6" fill="#f3f3f2" stroke="#dededd"/><polygon points="560.0,521.8 565.4,518.6 570.4,523.9 562.6,527.0" fill="#f2f2f2" stroke="#dededd"/><polygon points="564.1,529.8 571.6,526.7 575.3,530.7 566.6,535.8" fill="#f3f3f2" stroke="#dededd"/><polygon points="567.9,538.4 576.9,533.1 579.4,539.6 572.5,545.3" fill="#f3f3f2" stroke="#dededd"/><polygon points="574.4,547.8 581.0,542.3 584.1,548.2 575.7,553.1" fill="#f4f4f3" stroke="#dededd"/><polygon points="576.9,555.7 585.8,550.8 589.9,557.3 582.1,562.5" fill="#f3f3f2" stroke="#dededd"/><polygon points="584.0,565.2 591.5,560.0 595.4,566.4 587.1,570.3" fill="#f3f3f2" stroke="#dededd"/><polygon points="588.5,573.1 596.8,569.0 599.3,575.1 591.8,578.8" fill="#f3f3f2" stroke="#dededd"/><polygon points="593.2,581.7 600.9,578.1 604.3,584.0 597.8,588.3" fill="#f4f4f3" stroke="#dededd"/><polygon points="599.7,591.2 605.9,586.9 608.6,592.2 602.2,597.2" fill="#f2f2f1" stroke="#dededd"/><polygon points="536.0,454.8 543.1,449.2 544.9,455.8 539.0,460.5" fill="#f3f3f2" stroke="#dededd"/><polygon points="540.7,463.4 546.6,458.6 549.1,464.5 542.0,469.9" fill="#f4f4f3" stroke="#dededd"/><polygon points="543.5,472.5 551.1,467.2 555.7,473.9 548.0,478.2" fill="#f2f2f2" stroke="#dededd"/><polygon points="555.7,489.7 563.8,484.8 566.1,489.5 559.0,495.1" fill="#f4f4f3" stroke="#dededd"/><polygon points="560.6,497.7 567.9,491.8 572.6,499.5 562.2,503.4" fill="#f4f4f3" stroke="#dededd"/><polygon points="563.3,506.1 573.6,502.1 575.3,507.8 567.0,513.7" fill="#f3f3f2" stroke="#dededd"/><polygon points="575.5,524.5 582.9,520.4 587.7,525.5 579.1,528.4" fill="#f1f1f0" stroke="#dededd"/><polygon points="580.4,531.3 588.9,528.0 592.1,534.1 583.3,537.7" fill="#f3f3f2" stroke="#dededd"/><polygon points="584.6,540.4 593.2,536.9 595.9,542.5 587.9,546.1" fill="#f4f4f3" stroke="#dededd"/><polygon points="589.2,548.9 597.4,545.3 600.0,551.1 593.3,555.2" fill="#f2f2f1" stroke="#dededd"/><polygon points="595.0,558.1 602.0,554.1 607.3,560.2 598.9,564.3" fill="#f2f2f2" stroke="#dededd"/><polygon points="600.5,567.3 608.6,562.9 610.1,569.8 603.0,573.3" fill="#f4f4f3" stroke="#dededd"/><polygon points="604.4,576.1 611.6,573.0 616.5,577.4 607.9,582.0" fill="#f1f1f0" stroke="#dededd"/><polygon points="609.4,584.6 617.8,579.8 619.3,585.6 612.3,590.1" fill="#f1f1f0" stroke="#dededd"/><polygon points="613.8,592.7 621.1,588.3 625.6,594.0 617.3,598.5" fill="#f3f3f2" stroke="#dededd"/><polygon points="546.6,447.2 553.8,443.2 558.3,448.8 548.7,453.9" fill="#f2f2f1" stroke="#dededd"/><polygon points="550.1,456.4 559.6,451.3 563.1,457.6 553.1,462.5" fill="#f3f3f2" stroke="#dededd"/><polygon points="554.3,465.1 564.4,460.2 566.6,467.5 559.1,471.9" fill="#f3f3f2" stroke="#dededd"/><polygon points="560.8,474.6 568.5,470.6 573.9,475.8 565.8,480.0" fill="#f1f1f0" stroke="#dededd"/><polygon points="567.6,482.8 575.2,478.3 576.8,484.9 570.1,487.1" fill="#f2f2f2" stroke="#dededd"/><polygon points="577.7,500.2 585.0,495.7 587.5,500.3 579.2,505.8" fill="#f2f2f2" stroke="#dededd"/><polygon points="580.4,508.4 589.2,502.7 592.8,510.8 584.7,515.5" fill="#f4f4f3" stroke="#dededd"/><polygon points="586.4,518.1 594.5,513.8 598.6,518.8 591.1,523.3" fill="#f1f1f0" stroke="#dededd"/><polygon points="592.8,526.2 600.2,521.4 602.5,528.3 595.6,532.3" fill="#f4f4f3" stroke="#dededd"/><polygon points="597.2,535.2 603.9,531.3 605.9,536.9 599.6,540.6" fill="#f4f4f3" stroke="#dededd"/><polygon points="601.0,543.5 607.6,539.9 611.6,545.9 603.7,549.2" fill="#f4f4f3" stroke="#dededd"/><polygon points="605.1,552.1 613.2,548.9 616.3,554.7 610.4,558.0" fill="#f1f1f0" stroke="#dededd"/><polygon points="612.4,561.1 618.0,557.8 622.7,561.1 613.7,568.2" fill="#f2f2f1" stroke="#dededd"/><polygon points="615.2,570.4 624.3,563.3 627.3,570.5 619.9,575.1" fill="#f2f2f2" stroke="#dededd"/><polygon points="621.7,578.0 628.8,573.1 630.9,580.2 623.2,583.6" fill="#f4f4f3" stroke="#dededd"/><polygon points="624.5,586.2 632.4,583.3 637.6,587.2 629.1,591.8" fill="#f4f4f3" stroke="#dededd"/><polygon points="557.3,441.3 564.2,438.9 570.2,443.4 561.8,446.6" fill="#f1f1f0" stroke="#dededd"/><polygon points="563.5,449.5 571.4,446.0 573.6,450.5 566.7,455.5" fill="#f3f3f2" stroke="#dededd"/><polygon points="568.2,458.5 575.3,453.1 578.9,461.1 570.3,465.7" fill="#f2f2f2" stroke="#dededd"/><polygon points="579.0,476.5 585.6,472.5 589.0,476.7 580.4,483.4" fill="#f2f2f1" stroke="#dededd"/><polygon points="581.8,485.7 590.8,478.9 594.4,486.2 587.0,491.0" fill="#f2f2f1" stroke="#dededd"/><polygon points="588.9,493.7 596.0,488.9 600.2,495.2 591.4,498.0" fill="#f4f4f3" stroke="#dededd"/><polygon points="592.5,501.0 601.4,497.9 603.6,503.6 596.3,508.9" fill="#f3f3f2" stroke="#dededd"/><polygon points="598.0,511.5 605.2,506.4 606.9,512.5 601.8,516.4" fill="#f4f4f3" stroke="#dededd"/><polygon points="603.7,519.4 608.9,515.5 613.6,519.8 605.8,526.5" fill="#f1f1f0" stroke="#dededd"/><polygon points="607.6,528.9 615.2,522.1 617.7,529.0 609.6,535.0" fill="#f2f2f2" stroke="#dededd"/><polygon points="611.1,537.6 619.3,531.6 621.3,538.3 614.9,544.0" fill="#f4f4f3" stroke="#dededd"/><polygon points="616.7,546.6 623.3,541.0 627.5,547.5 619.6,552.9" fill="#f2f2f2" stroke="#dededd"/><polygon points="621.4,555.1 629.2,550.2 634.0,554.5 626.2,558.4" fill="#f2f2f2" stroke="#dededd"/><polygon points="627.8,561.5 635.6,556.9 637.7,564.6 630.8,568.3" fill="#f1f1f0" stroke="#dededd"/><polygon points="632.4,571.4 639.0,567.8 641.8,572.7 634.4,578.5" fill="#f4f4f3" stroke="#dededd"/><polygon points="636.0,580.9 643.8,575.3 648.6,582.0 641.0,584.8" fill="#f2f2f2" stroke="#dededd"/><polygon points="567.4,436.4 575.6,431.9 578.9,436.6 573.1,441.2" fill="#f4f4f3" stroke="#dededd"/><polygon points="575.3,443.8 580.8,439.1 585.2,444.3 577.3,448.3" fill="#f2f2f2" stroke="#dededd"/><polygon points="578.7,451.3 586.7,446.9 588.7,453.4 582.2,459.3" fill="#f1f1f0" stroke="#dededd"/><polygon points="584.0,461.9 590.7,456.3 595.7,462.9 587.5,467.7" fill="#f2f2f1" stroke="#dededd"/><polygon points="589.3,470.3 597.1,465.5 598.7,472.4 592.8,474.1" fill="#f2f2f2" stroke="#dededd"/><polygon points="594.1,477.2 600.4,475.8 605.7,479.4 597.8,484.0" fill="#f3f3f2" stroke="#dededd"/><polygon points="599.5,486.9 607.3,482.0 609.2,488.7 603.4,493.1" fill="#f4f4f3" stroke="#dededd"/><polygon points="605.3,496.2 610.9,491.8 613.8,498.5 607.2,501.6" fill="#f3f3f2" stroke="#dededd"/><polygon points="608.7,504.5 615.1,501.6 618.2,505.4 610.6,510.6" fill="#f3f3f2" stroke="#dededd"/><polygon points="612.0,513.1 620.1,508.0 625.5,515.0 617.1,517.2" fill="#f3f3f2" stroke="#dededd"/><polygon points="618.6,520.5 626.7,517.8 629.1,524.2 621.5,526.9" fill="#f2f2f2" stroke="#dededd"/><polygon points="622.8,529.9 630.3,527.3 633.8,532.2 625.2,536.2" fill="#f3f3f2" stroke="#dededd"/><polygon points="626.5,538.9 635.4,535.0 640.4,540.8 631.1,545.4" fill="#f4f4f3" stroke="#dededd"/><polygon points="639.0,555.5 645.9,553.0 648.8,559.0 641.2,563.1" fill="#f2f2f2" stroke="#dededd"/><polygon points="642.7,565.7 650.2,562.1 654.6,566.3 645.7,570.5" fill="#f4f4f3" stroke="#dededd"/><polygon points="584.0,437.0 593.1,432.8 595.7,439.2 588.7,442.1" fill="#f3f3f2" stroke="#dededd"/><polygon points="590.3,445.1 597.0,442.2 600.1,446.7 592.4,451.4" fill="#f1f1f0" stroke="#dededd"/><polygon points="593.8,454.3 601.9,449.4 605.3,457.2 598.9,460.7" fill="#f1f1f0" stroke="#dededd"/><polygon points="600.8,463.8 606.9,460.4 611.4,465.1 602.3,470.9" fill="#f2f2f2" stroke="#dededd"/><polygon points="603.7,473.1 613.0,467.6 616.4,472.6 609.2,477.1" fill="#f1f1f0" stroke="#dededd"/><polygon points="610.9,480.0 618.1,475.0 621.3,481.7 612.8,487.0" fill="#f2f2f2" stroke="#dededd"/><polygon points="614.3,489.7 622.8,484.5 625.7,491.2 617.3,496.9" fill="#f1f1f0" stroke="#dededd"/><polygon points="618.9,499.2 627.1,493.8 630.6,499.3 622.1,503.2" fill="#f4f4f3" stroke="#dededd"/><polygon points="623.4,505.9 632.1,501.8 634.1,507.7 628.5,513.0" fill="#f1f1f0" stroke="#dededd"/><polygon points="634.2,525.1 643.1,520.0 645.9,525.5 637.6,530.3" fill="#f2f2f1" stroke="#dededd"/><polygon points="639.0,532.8 647.4,528.0 649.6,533.4 643.6,538.6" fill="#f2f2f1" stroke="#dededd"/><polygon points="645.6,541.5 651.6,536.1 655.8,543.2 647.9,548.2" fill="#f2f2f2" stroke="#dededd"/><polygon points="649.5,550.9 657.3,545.9 659.7,552.0 652.3,557.3" fill="#f2f2f2" stroke="#dededd"/><polygon points="600.8,440.0 607.7,435.1 613.0,441.1 603.9,444.6" fill="#f2f2f1" stroke="#dededd"/><polygon points="610.4,458.0 619.0,452.5 621.8,458.2 614.9,462.8" fill="#f2f2f2" stroke="#dededd"/><polygon points="616.6,465.4 623.6,460.8 627.8,466.6 620.0,470.2" fill="#f3f3f2" stroke="#dededd"/><polygon points="621.6,473.1 629.3,469.4 632.4,474.7 624.8,479.7" fill="#f4f4f3" stroke="#dededd"/><polygon points="626.4,482.5 634.0,477.3 636.1,484.5 629.2,489.0" fill="#f1f1f0" stroke="#dededd"/><polygon points="630.8,491.7 637.7,487.5 640.7,492.3 634.1,497.0" fill="#f4f4f3" stroke="#dededd"/><polygon points="635.7,499.8 642.4,494.8 645.6,501.8 637.8,505.7" fill="#f2f2f1" stroke="#dededd"/><polygon points="646.9,518.1 653.1,512.9 656.4,520.1 649.5,523.3" fill="#f4f4f3" stroke="#dededd"/><polygon points="611.0,433.0 618.7,428.5 623.5,435.1 616.2,439.0" fill="#f1f1f0" stroke="#dededd"/><polygon points="618.1,441.7 625.1,438.0 629.2,441.9 621.1,447.8" fill="#f2f2f2" stroke="#dededd"/><polygon points="622.6,450.4 630.8,444.2 632.3,452.6 625.4,455.9" fill="#f1f1f0" stroke="#dededd"/><polygon points="626.9,458.7 634.0,456.0 639.2,460.0 631.2,464.5" fill="#f2f2f2" stroke="#dededd"/><polygon points="633.0,467.3 640.7,462.5 643.9,469.0 636.1,472.6" fill="#f3f3f2" stroke="#dededd"/><polygon points="637.5,475.6 645.3,471.8 649.2,478.1 639.9,482.8" fill="#f4f4f3" stroke="#dededd"/><polygon points="641.2,485.3 650.5,480.8 653.7,487.2 644.7,490.2" fill="#f2f2f2" stroke="#dededd"/><polygon points="645.9,492.9 655.0,489.9 659.1,494.8 649.4,500.1" fill="#f4f4f3" stroke="#dededd"/><polygon points="637.4,453.5 646.8,448.1 649.1,454.6 642.6,457.6" fill="#f1f1f0" stroke="#dededd"/><polygon points="644.3,460.7 650.6,457.5 653.1,462.3 647.2,467.0" fill="#f1f1f0" stroke="#dededd"/><polygon points="4.8,517.8 16.7,520.1 15.4,526.7 3.6,526.6" fill="#f2f2f1" stroke="#dededd"/><polygon points="3.5,529.4 15.1,529.4 12.7,536.9 2.1,535.5" fill="#f2f2f2" stroke="#dededd"/><polygon points="1.6,538.3 12.5,540.1 11.3,548.5 3.1,547.9" fill="#f2f2f1" stroke="#dededd"/><polygon points="2.9,551.7 10.9,552.1 9.7,560.4 1.7,558.6" fill="#f3f3f2" stroke="#dededd"/><polygon points="1.2,562.0 9.0,564.0 10.9,571.7 -1.6,569.8" fill="#f3f3f2" stroke="#dededd"/><polygon points="-1.9,572.6 10.5,574.4 9.7,582.5 -2.4,579.9" fill="#f2f2f2" stroke="#dededd"/><polygon points="-3.0,582.8 9.3,585.3 7.7,593.7 -5.6,592.2" fill="#f2f2f2" stroke="#dededd"/><polygon points="21.0,509.8 32.6,510.5 31.0,517.4 21.2,517.6" fill="#f1f1f0" stroke="#dededd"/><polygon points="21.1,520.7 30.9,520.4 29.9,528.1 19.7,527.0" fill="#f3f3f2" stroke="#dededd"/><polygon points="19.3,530.2 29.6,531.1 28.6,540.0 17.0,537.6" fill="#f2f2f1" stroke="#dededd"/><polygon points="16.4,540.6 28.1,542.9 25.6,550.9 15.3,549.2" fill="#f2f2f1" stroke="#dededd"/><polygon points="14.8,552.3 25.1,554.2 26.2,561.8 13.4,561.2" fill="#f2f2f2" stroke="#dededd"/><polygon points="13.3,564.0 26.0,564.6 23.7,572.5 15.0,571.8" fill="#f2f2f2" stroke="#dededd"/><polygon points="14.8,575.2 23.5,575.9 24.4,583.8 13.9,582.8" fill="#f3f3f2" stroke="#dededd"/><polygon points="36.7,511.1 47.2,512.8 47.4,521.7 35.5,518.1" fill="#f4f4f3" stroke="#dededd"/><polygon points="34.9,520.8 46.7,524.3 46.2,531.4 34.3,528.9" fill="#f2f2f2" stroke="#dededd"/><polygon points="33.7,531.7 45.7,534.3 45.6,542.7 32.7,540.7" fill="#f2f2f1" stroke="#dededd"/><polygon points="32.3,543.6 45.1,545.4 42.8,552.9 29.7,551.8" fill="#f2f2f1" stroke="#dededd"/><polygon points="29.4,554.4 42.5,555.7 39.6,563.2 30.5,562.0" fill="#f4f4f3" stroke="#dededd"/><polygon points="30.1,565.3 39.3,566.6 40.5,575.5 27.9,573.2" fill="#f4f4f3" stroke="#dededd"/><polygon points="27.5,576.0 40.0,578.3 37.0,585.1 28.6,584.1" fill="#f3f3f2" stroke="#dededd"/><polygon points="28.1,587.4 36.5,588.5 37.3,596.6 25.0,594.3" fill="#f1f1f0" stroke="#dededd"/><polygon points="51.4,513.2 62.0,514.8 63.3,522.2 51.3,522.0" fill="#f1f1f0" stroke="#dededd"/><polygon points="51.2,525.1 63.2,524.9 60.0,533.5 50.4,532.0" fill="#f1f1f0" stroke="#dededd"/><polygon points="49.9,535.1 59.4,536.9 59.3,544.9 49.7,543.1" fill="#f4f4f3" stroke="#dededd"/><polygon points="49.3,546.3 58.8,547.9 57.8,554.6 47.2,553.4" fill="#f4f4f3" stroke="#dededd"/><polygon points="46.6,556.5 57.5,557.6 55.9,567.0 43.8,564.1" fill="#f2f2f1" stroke="#dededd"/><polygon points="43.4,566.8 55.2,569.9 55.0,576.3 44.6,575.8" fill="#f3f3f2" stroke="#dededd"/><polygon points="44.3,579.1 54.8,579.2 53.4,588.0 41.1,586.0" fill="#f4f4f3" stroke="#dededd"/><polygon points="40.7,588.8 52.8,590.9 50.1,598.0 41.5,596.9" fill="#f2f2f1" stroke="#dededd"/><polygon points="69.2,505.2 79.0,506.4 79.2,514.3 66.6,512.4" fill="#f3f3f2" stroke="#dededd"/><polygon points="66.3,515.0 78.8,517.0 77.7,524.3 67.7,522.4" fill="#f4f4f3" stroke="#dededd"/><polygon points="67.1,525.6 77.4,527.2 75.7,534.6 63.9,534.3" fill="#f4f4f3" stroke="#dededd"/><polygon points="63.6,537.2 75.4,537.7 74.5,546.7 63.3,545.4" fill="#f3f3f2" stroke="#dededd"/><polygon points="61.4,558.3 71.3,559.7 68.8,567.2 59.7,567.4" fill="#f4f4f3" stroke="#dededd"/><polygon points="59.5,570.7 68.5,570.8 68.7,580.4 59.4,576.7" fill="#f1f1f0" stroke="#dededd"/><polygon points="58.7,579.9 68.0,583.5 68.8,590.9 57.5,588.7" fill="#f3f3f2" stroke="#dededd"/><polygon points="83.1,507.0 94.4,509.4 92.9,517.2 83.5,514.8" fill="#f4f4f3" stroke="#dededd"/><polygon points="82.9,517.9 92.3,520.3 92.1,528.1 82.1,525.0" fill="#f1f1f0" stroke="#dededd"/><polygon points="81.3,528.0 91.4,530.8 88.3,537.3 80.0,535.3" fill="#f3f3f2" stroke="#dededd"/><polygon points="79.2,538.3 87.6,540.8 88.5,548.7 78.6,547.0" fill="#f3f3f2" stroke="#dededd"/><polygon points="78.2,550.4 88.1,551.8 87.8,560.4 75.9,557.5" fill="#f1f1f0" stroke="#dededd"/><polygon points="75.4,560.2 87.1,563.1 87.0,569.9 72.9,568.3" fill="#f1f1f0" stroke="#dededd"/><polygon points="72.4,570.9 86.8,572.6 82.6,581.3 72.4,580.9" fill="#f4f4f3" stroke="#dededd"/><polygon points="72.3,584.0 82.0,584.6 80.5,590.7 72.7,591.1" fill="#f3f3f2" stroke="#dededd"/><polygon points="98.8,510.0 110.0,511.1 108.6,518.0 96.9,517.9" fill="#f3f3f2" stroke="#dededd"/><polygon points="95.8,531.8 105.0,531.5 104.2,538.7 92.1,538.3" fill="#f4f4f3" stroke="#dededd"/><polygon points="91.8,541.0 104.1,541.8 103.9,551.9 92.6,549.2" fill="#f4f4f3" stroke="#dededd"/><polygon points="92.2,552.3 103.3,554.8 101.6,561.4 91.8,560.9" fill="#f4f4f3" stroke="#dededd"/><polygon points="91.5,564.0 101.3,564.6 100.9,573.2 91.5,570.3" fill="#f2f2f1" stroke="#dededd"/><polygon points="90.5,573.6 100.3,576.2 98.1,583.8 86.6,582.2" fill="#f2f2f2" stroke="#dededd"/><polygon points="86.3,584.9 97.3,586.9 98.4,594.1 84.9,591.6" fill="#f2f2f2" stroke="#dededd"/><polygon points="114.3,511.8 124.7,512.3 122.7,521.1 113.1,518.4" fill="#f2f2f1" stroke="#dededd"/><polygon points="112.4,521.5 121.9,524.1 121.7,530.3 109.6,529.2" fill="#f2f2f1" stroke="#dededd"/><polygon points="109.2,531.9 121.4,533.1 120.9,542.3 108.6,539.3" fill="#f2f2f1" stroke="#dededd"/><polygon points="108.1,542.2 120.4,545.1 119.2,551.9 107.8,552.3" fill="#f4f4f3" stroke="#dededd"/><polygon points="107.8,555.4 119.0,555.0 118.3,564.2 105.9,562.1" fill="#f2f2f2" stroke="#dededd"/><polygon points="105.3,565.0 117.9,567.0 113.9,575.5 104.9,573.8" fill="#f3f3f2" stroke="#dededd"/><polygon points="104.4,577.1 113.0,578.8 113.3,584.8 102.0,584.6" fill="#f2f2f2" stroke="#dededd"/><polygon points="101.9,587.3 113.2,587.7 113.4,595.6 102.8,594.2" fill="#f2f2f1" stroke="#dededd"/><polygon points="128.7,512.8 137.2,513.7 138.4,521.4 126.4,521.7" fill="#f3f3f2" stroke="#dededd"/><polygon points="126.5,524.6 138.2,524.2 135.1,531.7 126.0,530.7" fill="#f2f2f1" stroke="#dededd"/><polygon points="125.4,533.9 134.7,535.1 133.0,543.0 124.8,542.4" fill="#f4f4f3" stroke="#dededd"/><polygon points="124.7,545.8 132.6,546.7 134.7,554.6 123.5,552.4" fill="#f4f4f3" stroke="#dededd"/><polygon points="123.0,555.4 134.4,557.5 133.2,565.2 122.4,564.5" fill="#f1f1f0" stroke="#dededd"/><polygon points="122.0,567.9 132.8,568.2 130.3,576.3 117.6,576.4" fill="#f3f3f2" stroke="#dededd"/><polygon points="117.5,579.1 129.9,579.2 126.7,586.8 117.7,585.2" fill="#f1f1f0" stroke="#dededd"/><polygon points="117.2,588.2 126.4,590.1 126.7,598.7 117.7,595.8" fill="#f3f3f2" stroke="#dededd"/><polygon points="144.6,503.2 153.4,506.2 153.0,512.4 141.6,511.0" fill="#f1f1f0" stroke="#dededd"/><polygon points="141.2,513.7 152.8,515.6 153.6,525.1 142.8,521.7" fill="#f2f2f2" stroke="#dededd"/><polygon points="142.2,525.0 153.0,527.8 150.1,534.2 139.3,532.7" fill="#f1f1f0" stroke="#dededd"/><polygon points="138.6,535.5 149.5,537.3 147.6,545.3 136.9,543.8" fill="#f3f3f2" stroke="#dededd"/><polygon points="136.6,546.7 147.2,548.6 148.2,556.8 138.8,554.7" fill="#f2f2f1" stroke="#dededd"/><polygon points="138.5,558.2 147.8,559.7 145.1,566.1 137.3,565.6" fill="#f1f1f0" stroke="#dededd"/><polygon points="136.8,568.9 144.7,569.8 146.1,578.0 134.5,576.8" fill="#f2f2f1" stroke="#dededd"/><polygon points="134.0,580.0 145.7,580.8 142.1,589.0 130.9,587.6" fill="#f2f2f2" stroke="#dededd"/><polygon points="157.9,506.7 171.2,506.7 167.9,514.7 157.3,513.1" fill="#f3f3f2" stroke="#dededd"/><polygon points="156.8,516.0 167.6,517.9 166.9,526.4 157.5,525.3" fill="#f2f2f1" stroke="#dededd"/><polygon points="157.2,528.9 166.5,529.7 166.7,538.7 154.3,535.3" fill="#f4f4f3" stroke="#dededd"/><polygon points="153.7,538.0 166.1,541.3 165.3,548.1 151.8,546.2" fill="#f2f2f2" stroke="#dededd"/><polygon points="151.4,548.8 164.9,550.7 161.3,558.5 152.3,557.2" fill="#f2f2f1" stroke="#dededd"/><polygon points="151.9,560.5 160.8,561.8 161.7,570.0 149.2,567.2" fill="#f3f3f2" stroke="#dededd"/><polygon points="148.6,569.9 161.3,572.9 161.1,582.2 150.3,578.5" fill="#f4f4f3" stroke="#dededd"/><polygon points="149.6,581.8 160.4,584.9 158.0,591.9 146.3,590.0" fill="#f4f4f3" stroke="#dededd"/><polygon points="175.1,507.7 183.7,509.3 183.0,517.3 172.1,515.4" fill="#f2f2f1" stroke="#dededd"/><polygon points="171.6,518.3 182.4,520.4 181.0,527.7 170.9,526.9" fill="#f2f2f1" stroke="#dededd"/><polygon points="170.5,542.2 179.7,541.9 179.9,551.1 169.6,548.5" fill="#f2f2f2" stroke="#dededd"/><polygon points="169.0,551.7 179.4,553.9 178.5,561.5 165.4,559.6" fill="#f3f3f2" stroke="#dededd"/><polygon points="165.0,562.2 178.1,564.3 176.3,572.2 165.9,570.4" fill="#f2f2f2" stroke="#dededd"/><polygon points="165.5,573.6 175.9,575.2 173.9,582.0 164.9,582.5" fill="#f4f4f3" stroke="#dededd"/><polygon points="164.8,585.9 173.7,585.3 173.0,593.6 162.1,592.6" fill="#f2f2f1" stroke="#dededd"/><polygon points="187.9,509.7 199.2,511.3 199.2,519.6 187.1,518.0" fill="#f3f3f2" stroke="#dededd"/><polygon points="183.6,542.1 195.2,545.0 193.4,551.6 183.9,551.4" fill="#f3f3f2" stroke="#dededd"/><polygon points="183.6,554.7 193.3,555.0 193.1,564.2 182.7,562.0" fill="#f4f4f3" stroke="#dededd"/><polygon points="182.2,565.1 192.5,567.2 192.2,575.0 180.5,572.9" fill="#f3f3f2" stroke="#dededd"/><polygon points="177.6,585.6 188.4,587.6 186.7,595.1 177.1,594.0" fill="#f2f2f1" stroke="#dededd"/><polygon points="203.2,511.8 214.3,514.5 212.2,521.8 203.4,520.0" fill="#f2f2f1" stroke="#dededd"/><polygon points="202.9,523.2 211.6,525.1 212.9,532.3 201.0,531.2" fill="#f3f3f2" stroke="#dededd"/><polygon points="200.5,534.2 212.6,535.2 209.0,544.3 199.8,542.6" fill="#f3f3f2" stroke="#dededd"/><polygon points="199.5,545.8 208.1,547.6 208.8,553.9 197.7,552.4" fill="#f3f3f2" stroke="#dededd"/><polygon points="197.2,555.2 208.6,556.7 206.5,564.0 196.9,564.5" fill="#f2f2f1" stroke="#dededd"/><polygon points="196.9,567.7 206.5,567.4 206.6,575.6 196.2,575.2" fill="#f3f3f2" stroke="#dededd"/><polygon points="195.9,578.6 206.3,578.5 202.8,586.9 193.1,585.3" fill="#f4f4f3" stroke="#dededd"/><polygon points="192.4,588.4 202.1,590.3 201.4,598.9 190.9,595.9" fill="#f1f1f0" stroke="#dededd"/><polygon points="218.7,515.1 229.6,515.1 229.4,523.7 216.2,522.6" fill="#f1f1f0" stroke="#dededd"/><polygon points="215.9,525.4 229.1,526.5 225.0,534.6 217.2,532.6" fill="#f3f3f2" stroke="#dededd"/><polygon points="216.4,536.0 224.3,538.1 225.3,545.1 212.7,545.1" fill="#f2f2f1" stroke="#dededd"/><polygon points="212.6,547.8 225.1,547.9 222.9,555.4 213.1,554.2" fill="#f4f4f3" stroke="#dededd"/><polygon points="212.6,557.4 222.7,558.6 223.2,568.8 210.9,564.8" fill="#f4f4f3" stroke="#dededd"/><polygon points="210.3,567.5 222.4,571.4 220.0,577.3 210.8,576.0" fill="#f2f2f2" stroke="#dededd"/><polygon points="233.4,515.7 243.5,518.8 242.1,526.8 233.7,524.0" fill="#f4f4f3" stroke="#dededd"/><polygon points="232.9,527.5 241.3,530.0 241.8,537.0 228.9,535.7" fill="#f2f2f2" stroke="#dededd"/><polygon points="228.6,538.3 241.5,539.8 239.0,548.3 229.7,545.5" fill="#f4f4f3" stroke="#dededd"/><polygon points="229.1,548.6 238.4,551.5 239.5,559.7 227.3,556.2" fill="#f2f2f1" stroke="#dededd"/><polygon points="226.6,559.0 238.9,562.5 235.9,569.7 227.0,569.1" fill="#f2f2f2" stroke="#dededd"/><polygon points="226.8,572.4 235.4,573.1 236.6,580.9 224.3,578.3" fill="#f3f3f2" stroke="#dededd"/><polygon points="223.8,580.9 236.2,583.7 235.2,590.5 224.2,591.0" fill="#f4f4f3" stroke="#dededd"/><polygon points="249.2,508.7 262.3,509.0 257.9,517.8 248.2,516.5" fill="#f2f2f1" stroke="#dededd"/><polygon points="247.7,519.6 257.2,521.3 258.2,529.2 246.0,527.7" fill="#f3f3f2" stroke="#dededd"/><polygon points="242.7,552.0 253.5,554.1 252.8,560.7 243.5,560.0" fill="#f2f2f2" stroke="#dededd"/><polygon points="243.2,563.3 252.6,563.8 253.3,572.5 239.9,570.6" fill="#f1f1f0" stroke="#dededd"/><polygon points="239.6,573.3 252.8,575.1 249.5,582.2 240.8,581.2" fill="#f1f1f0" stroke="#dededd"/><polygon points="240.5,584.4 249.1,585.6 249.7,593.2 239.7,590.9" fill="#f4f4f3" stroke="#dededd"/><polygon points="266.0,510.0 275.5,511.4 273.3,520.1 261.8,518.7" fill="#f2f2f2" stroke="#dededd"/><polygon points="261.4,521.6 272.7,523.3 271.0,530.3 262.4,529.3" fill="#f3f3f2" stroke="#dededd"/><polygon points="262.0,532.7 270.6,533.5 270.1,541.0 259.7,539.1" fill="#f2f2f1" stroke="#dededd"/><polygon points="259.0,542.1 269.6,544.2 268.7,551.9 258.0,551.5" fill="#f1f1f0" stroke="#dededd"/><polygon points="257.9,554.5 268.3,554.9 266.6,561.5 257.0,561.1" fill="#f3f3f2" stroke="#dededd"/><polygon points="256.7,564.1 266.6,564.8 266.4,573.3 257.2,572.5" fill="#f2f2f1" stroke="#dededd"/><polygon points="257.0,576.0 266.1,576.5 265.4,583.8 253.6,583.0" fill="#f1f1f0" stroke="#dededd"/><polygon points="253.2,585.8 265.2,586.8 263.1,595.0 253.7,593.6" fill="#f4f4f3" stroke="#dededd"/><polygon points="279.6,511.9 290.7,513.3 290.8,521.2 277.3,520.8" fill="#f4f4f3" stroke="#dededd"/><polygon points="277.1,523.6 290.5,523.8 287.3,531.4 275.1,531.0" fill="#f4f4f3" stroke="#dededd"/><polygon points="274.9,533.7 287.1,534.4 287.0,542.9 274.2,541.7" fill="#f1f1f0" stroke="#dededd"/><polygon points="273.8,544.6 286.7,545.6 282.8,553.9 272.9,552.4" fill="#f2f2f2" stroke="#dededd"/><polygon points="272.5,555.4 282.1,557.1 282.9,563.9 271.0,562.2" fill="#f2f2f2" stroke="#dededd"/><polygon points="270.5,565.0 282.7,566.7 279.9,574.4 270.4,573.7" fill="#f2f2f2" stroke="#dededd"/><polygon points="270.2,576.9 279.7,578.0 281.7,588.1 269.8,584.3" fill="#f4f4f3" stroke="#dededd"/><polygon points="269.1,587.5 281.1,590.7 277.4,598.2 267.3,595.9" fill="#f2f2f2" stroke="#dededd"/><polygon points="294.8,513.8 305.8,515.1 303.4,523.3 295.1,521.3" fill="#f1f1f0" stroke="#dededd"/><polygon points="294.4,524.8 302.7,526.6 301.6,534.0 291.7,532.0" fill="#f2f2f2" stroke="#dededd"/><polygon points="291.1,535.0 301.1,537.3 300.0,545.9 291.2,543.2" fill="#f2f2f2" stroke="#dededd"/><polygon points="290.6,546.6 299.2,549.1 300.1,556.0 286.8,554.8" fill="#f2f2f2" stroke="#dededd"/><polygon points="286.6,557.4 299.8,558.6 298.8,566.3 287.4,564.4" fill="#f3f3f2" stroke="#dededd"/><polygon points="286.9,567.3 298.5,569.1 297.9,577.6 284.1,575.3" fill="#f1f1f0" stroke="#dededd"/><polygon points="283.6,578.0 297.6,580.5 296.0,588.8 285.5,588.3" fill="#f3f3f2" stroke="#dededd"/><polygon points="309.7,515.8 319.2,518.0 317.7,524.7 307.3,524.1" fill="#f1f1f0" stroke="#dededd"/><polygon points="306.9,527.1 317.4,527.9 318.1,536.6 305.6,534.8" fill="#f4f4f3" stroke="#dededd"/><polygon points="305.2,537.8 317.8,539.4 316.6,548.2 303.8,546.7" fill="#f2f2f1" stroke="#dededd"/><polygon points="303.6,549.5 316.2,551.0 314.3,559.1 304.6,556.5" fill="#f1f1f0" stroke="#dededd"/><polygon points="303.9,559.5 313.7,562.1 311.8,570.0 303.2,566.9" fill="#f1f1f0" stroke="#dededd"/><polygon points="302.4,570.0 311.0,573.2 309.9,579.8 302.1,578.0" fill="#f3f3f2" stroke="#dededd"/><polygon points="301.5,581.3 309.4,583.4 310.5,591.5 300.2,589.3" fill="#f4f4f3" stroke="#dededd"/><polygon points="323.6,518.6 335.6,520.8 333.8,527.3 322.0,525.6" fill="#f3f3f2" stroke="#dededd"/><polygon points="321.6,528.1 333.5,530.2 333.8,537.8 322.3,536.8" fill="#f2f2f1" stroke="#dededd"/><polygon points="322.0,540.0 333.6,540.7 331.2,548.7 320.8,548.5" fill="#f4f4f3" stroke="#dededd"/><polygon points="320.5,551.6 330.9,551.9 330.6,559.8 318.3,559.7" fill="#f4f4f3" stroke="#dededd"/><polygon points="318.0,562.8 330.4,562.6 327.0,572.2 315.6,570.9" fill="#f3f3f2" stroke="#dededd"/><polygon points="313.6,583.5 325.0,585.2 325.8,593.4 314.5,592.0" fill="#f3f3f2" stroke="#dededd"/><polygon points="12.9,60.5 20.3,63.1 20.0,71.9 9.9,66.3" fill="#f5f5f4" stroke="#e5e5e4"/><polygon points="8.5,69.0 18.8,74.3 14.1,79.4 4.7,76.8" fill="#f3f3f2" stroke="#e5e5e4"/><polygon points="3.9,79.5 12.9,82.4 11.7,88.2 1.8,86.0" fill="#f5f5f4" stroke="#e5e5e4"/><polygon points="1.0,88.9 11.1,91.0 7.6,98.6 -1.2,95.5" fill="#f3f3f2" stroke="#e5e5e4"/><polygon points="22.7,76.3 29.7,77.6 27.3,83.2 17.9,81.0" fill="#f3f3f2" stroke="#e5e5e4"/><polygon points="17.1,83.6 26.5,86.2 25.6,94.1 16.0,89.5" fill="#f3f3f2" stroke="#e5e5e4"/><polygon points="14.7,92.4 24.6,96.8 20.6,103.9 11.5,100.1" fill="#f5f5f4" stroke="#e5e5e4"/><polygon points="10.3,103.0 19.2,106.8 17.3,112.7 7.0,110.0" fill="#f5f5f4" stroke="#e5e5e4"/><polygon points="6.3,112.5 16.4,115.4 14.8,121.6 5.0,118.3" fill="#f5f5f4" stroke="#e5e5e4"/><polygon points="4.2,120.9 14.1,124.5 12.9,132.8 4.0,127.9" fill="#f3f3f2" stroke="#e5e5e4"/><polygon points="42.0,61.2 51.8,63.5 47.9,71.3 38.7,67.5" fill="#f3f3f2" stroke="#e5e5e4"/><polygon points="37.7,70.3 46.5,74.1 46.6,80.1 34.7,76.3" fill="#f4f4f3" stroke="#e5e5e4"/><polygon points="30.4,87.3 40.7,92.0 38.6,99.1 29.6,95.3" fill="#f3f3f2" stroke="#e5e5e4"/><polygon points="23.3,108.3 32.6,111.6 30.9,118.2 21.5,114.2" fill="#f5f5f4" stroke="#e5e5e4"/><polygon points="20.5,116.9 29.9,120.9 28.3,128.4 19.1,123.1" fill="#f3f3f2" stroke="#e5e5e4"/><polygon points="50.8,75.5 60.6,77.8 58.7,86.0 51.0,81.3" fill="#f3f3f2" stroke="#e5e5e4"/><polygon points="49.5,84.3 57.5,88.6 54.4,94.4 45.7,90.8" fill="#f3f3f2" stroke="#e5e5e4"/><polygon points="44.5,93.5 53.1,97.4 50.6,104.4 42.5,100.6" fill="#f4f4f3" stroke="#e5e5e4"/><polygon points="41.3,103.5 49.3,107.2 47.4,111.8 37.6,110.2" fill="#f3f3f2" stroke="#e5e5e4"/><polygon points="67.0,70.9 75.9,73.8 75.1,79.8 65.5,76.3" fill="#f4f4f3" stroke="#e5e5e4"/><polygon points="64.4,79.0 74.4,82.7 72.0,91.0 62.5,87.2" fill="#f3f3f2" stroke="#e5e5e4"/><polygon points="46.1,125.9 58.0,130.3 55.9,136.5 45.7,132.9" fill="#f4f4f3" stroke="#e5e5e4"/><polygon points="44.7,135.7 55.1,139.0 50.9,144.6 41.5,142.3" fill="#f3f3f2" stroke="#e5e5e4"/><polygon points="80.2,75.0 92.1,77.6 87.6,84.0 79.3,81.0" fill="#f5f5f4" stroke="#e5e5e4"/><polygon points="70.7,104.1 81.4,106.5 76.7,112.4 68.8,108.9" fill="#f5f5f4" stroke="#e5e5e4"/><polygon points="67.5,111.5 75.4,115.4 73.2,121.1 65.0,118.6" fill="#f5f5f4" stroke="#e5e5e4"/><polygon points="64.0,121.6 72.3,124.4 70.9,132.1 62.9,128.8" fill="#f5f5f4" stroke="#e5e5e4"/><polygon points="62.0,132.1 69.8,134.9 66.9,140.1 60.1,137.7" fill="#f5f5f4" stroke="#e5e5e4"/><polygon points="90.5,88.3 100.5,93.0 97.6,98.3 89.4,95.7" fill="#f5f5f4" stroke="#e5e5e4"/><polygon points="88.5,98.6 96.7,101.3 95.8,108.0 86.4,105.1" fill="#f4f4f3" stroke="#e5e5e4"/><polygon points="79.5,116.8 89.1,119.8 87.6,127.8 77.2,122.8" fill="#f5f5f4" stroke="#e5e5e4"/><polygon points="76.1,125.5 86.5,130.3 82.8,136.2 74.8,133.4" fill="#f5f5f4" stroke="#e5e5e4"/><polygon points="104.6,94.8 111.2,97.8 112.4,103.7 101.7,99.9" fill="#f5f5f4" stroke="#e5e5e4"/><polygon points="100.7,102.5 111.7,106.0 106.4,112.0 99.9,109.2" fill="#f4f4f3" stroke="#e5e5e4"/><polygon points="85.8,140.4 97.8,144.1 92.9,150.2 84.6,147.9" fill="#f3f3f2" stroke="#e5e5e4"/><polygon points="115.5,99.0 126.1,102.6 123.9,109.5 116.8,104.9" fill="#f3f3f2" stroke="#e5e5e4"/><polygon points="101.4,146.0 108.5,148.4 106.0,156.0 96.8,151.8" fill="#f3f3f2" stroke="#e5e5e4"/><polygon points="124.1,122.4 131.7,125.1 131.2,133.4 121.3,128.8" fill="#f5f5f4" stroke="#e5e5e4"/><polygon points="120.2,131.6 130.0,136.0 126.2,141.4 119.1,138.3" fill="#f4f4f3" stroke="#e5e5e4"/><polygon points="112.3,149.6 122.0,154.2 119.7,160.0 109.7,157.5" fill="#f5f5f4" stroke="#e5e5e4"/><polygon points="-2.9,305.5 3.8,305.8 4.1,312.9 -4.5,312.8" fill="#f3f3f2" stroke="#e5e5e4"/><polygon points="-3.0,325.1 3.2,326.1 5.0,332.2 -4.1,331.0" fill="#f4f4f3" stroke="#e5e5e4"/><polygon points="-4.4,345.4 3.8,345.4 5.0,352.4 -2.8,351.1" fill="#f4f4f3" stroke="#e5e5e4"/><polygon points="-3.0,354.6 4.8,355.6 5.2,361.9 -4.3,362.1" fill="#f4f4f3" stroke="#e5e5e4"/><polygon points="-4.3,365.1 5.1,365.0 3.3,370.9 -4.0,371.8" fill="#f5f5f4" stroke="#e5e5e4"/><polygon points="-4.1,395.2 3.9,396.4 5.6,402.4 -3.7,403.0" fill="#f5f5f4" stroke="#e5e5e4"/><polygon points="-3.5,406.2 5.7,405.3 3.6,411.9 -4.2,412.0" fill="#f3f3f2" stroke="#e5e5e4"/><polygon points="-2.9,425.1 4.3,425.3 3.9,432.2 -2.5,432.2" fill="#f4f4f3" stroke="#e5e5e4"/><polygon points="-2.4,435.9 3.7,436.0 5.6,441.2 -4.3,443.1" fill="#f4f4f3" stroke="#e5e5e4"/><polygon points="8.1,316.3 15.4,314.8 15.8,323.0 7.2,322.8" fill="#f4f4f3" stroke="#e5e5e4"/><polygon points="7.4,325.9 15.6,326.2 15.6,331.1 8.8,332.0" fill="#f5f5f4" stroke="#e5e5e4"/><polygon points="8.9,335.6 16.1,334.3 15.9,342.5 7.8,342.0" fill="#f3f3f2" stroke="#e5e5e4"/><polygon points="9.1,355.6 16.4,354.7 17.6,361.2 9.2,361.8" fill="#f5f5f4" stroke="#e5e5e4"/><polygon points="7.3,374.2 17.0,374.9 16.5,381.6 7.7,381.6" fill="#f3f3f2" stroke="#e5e5e4"/><polygon points="9.8,405.5 15.7,404.5 17.4,411.2 7.6,412.0" fill="#f5f5f4" stroke="#e5e5e4"/><polygon points="7.6,415.2 17.5,414.3 15.9,422.4 8.2,421.8" fill="#f5f5f4" stroke="#e5e5e4"/><polygon points="8.1,425.2 15.7,425.9 16.4,431.7 7.6,432.5" fill="#f3f3f2" stroke="#e5e5e4"/><polygon points="20.8,305.5 28.7,304.3 28.4,311.7 19.3,311.5" fill="#f5f5f4" stroke="#e5e5e4"/><polygon points="19.2,314.6 28.3,314.9 26.9,320.7 19.5,322.8" fill="#f3f3f2" stroke="#e5e5e4"/><polygon points="19.8,334.2 28.7,335.6 28.8,342.0 19.7,342.7" fill="#f3f3f2" stroke="#e5e5e4"/><polygon points="19.9,345.8 28.8,345.2 28.2,352.2 20.4,351.4" fill="#f5f5f4" stroke="#e5e5e4"/><polygon points="21.7,364.5 29.6,364.1 29.7,372.3 21.1,371.8" fill="#f3f3f2" stroke="#e5e5e4"/><polygon points="21.0,375.2 29.3,375.4 27.1,380.9 20.5,381.6" fill="#f3f3f2" stroke="#e5e5e4"/><polygon points="20.0,395.1 27.2,395.2 29.7,402.3 19.5,401.1" fill="#f5f5f4" stroke="#e5e5e4"/><polygon points="19.5,404.0 29.6,405.2 29.8,411.4 21.5,411.0" fill="#f4f4f3" stroke="#e5e5e4"/><polygon points="20.5,434.9 29.5,435.2 27.3,440.8 20.1,441.3" fill="#f4f4f3" stroke="#e5e5e4"/></g>
<path d="M260.0 0.0 L257.0 38.0 L247.0 76.0 L222.0 120.0 L206.0 152.0 L196.0 190.0 L203.0 222.0 L234.0 253.0 L272.0 276.0 L304.0 299.0 L342.0 347.0 L339.0 407.0 L326.0 487.0 L336.0 550.0 L348.0 594.0" fill="none" stroke="#dfdfde" stroke-width="4.6" stroke-linejoin="round"/>
<path d="M0.0 86.0 L63.0 95.0 L105.0 133.0 L152.0 143.0 L206.0 152.0 L241.0 165.0 L285.0 177.0 L317.0 190.0" fill="none" stroke="#dfdfde" stroke-width="4.6" stroke-linejoin="round"/>
<path d="M60.0 193.0 L136.0 192.0 L203.0 203.0 L241.0 222.0" fill="none" stroke="#dfdfde" stroke-width="4.6" stroke-linejoin="round"/>
<path d="M60.0 190.0 L95.0 158.0 L120.0 136.0" fill="none" stroke="#dfdfde" stroke-width="4.6" stroke-linejoin="round"/>
<path d="M136.0 190.0 L143.0 222.0 L149.0 297.0" fill="none" stroke="#dfdfde" stroke-width="4.6" stroke-linejoin="round"/>
<path d="M158.0 0.0 L177.0 19.0 L190.0 32.0 L228.0 63.0 L241.0 89.0" fill="none" stroke="#dfdfde" stroke-width="4.6" stroke-linejoin="round"/>
<path d="M294.0 44.0 L317.0 33.0 L346.0 27.0 L380.0 21.0 L428.0 19.0 L448.0 24.0 L453.0 28.0 L431.0 75.0 L425.0 102.0 L407.0 147.0" fill="none" stroke="#dfdfde" stroke-width="4.6" stroke-linejoin="round"/>
<path d="M630.0 0.0 L621.0 32.0 L598.0 44.0 L554.0 73.0 L497.0 92.0 L465.0 105.0" fill="none" stroke="#dfdfde" stroke-width="4.6" stroke-linejoin="round"/>
<path d="M754.0 0.0 L719.0 32.0 L687.0 51.0 L671.0 73.0 L649.0 95.0 L602.0 133.0 L535.0 158.0 L497.0 165.0 L456.0 162.0" fill="none" stroke="#dfdfde" stroke-width="4.6" stroke-linejoin="round"/>
<path d="M469.0 0.0 L452.0 32.0 L435.0 72.0" fill="none" stroke="#dfdfde" stroke-width="4.6" stroke-linejoin="round"/>
<path d="M507.0 407.0 L579.0 417.0 L624.0 430.0 L719.0 449.0 L809.0 474.0" fill="none" stroke="#dfdfde" stroke-width="4.6" stroke-linejoin="round"/>
<path d="M665.0 417.0 L757.0 432.0 L809.0 447.0" fill="none" stroke="#dfdfde" stroke-width="4.6" stroke-linejoin="round"/>
<path d="M453.0 525.0 L507.0 474.0 L579.0 430.0" fill="none" stroke="#dfdfde" stroke-width="4.6" stroke-linejoin="round"/>
<path d="M0.0 310.0 L41.0 322.0 L95.0 354.0 L165.0 386.0 L234.0 417.0 L285.0 430.0 L329.0 427.0" fill="none" stroke="#dfdfde" stroke-width="4.6" stroke-linejoin="round"/>
<path d="M76.0 512.0 L127.0 474.0 L203.0 427.0 L241.0 402.0 L272.0 367.0 L304.0 335.0 L326.0 316.0" fill="none" stroke="#dfdfde" stroke-width="4.6" stroke-linejoin="round"/>
<path d="M307.0 0.0 L357.0 87.0 L407.0 167.0 L447.0 267.0 L437.0 367.0 L407.0 467.0 L387.0 594.0" fill="none" stroke="#dfdfde" stroke-width="4.6" stroke-linejoin="round"/>
<path d="M257.0 117.0 L357.0 147.0 L467.0 167.0 L507.0 187.0" fill="none" stroke="#dfdfde" stroke-width="4.6" stroke-linejoin="round"/>
<path d="M337.0 287.0 L427.0 307.0 L507.0 327.0" fill="none" stroke="#dfdfde" stroke-width="4.6" stroke-linejoin="round"/>
<path d="M358.0 136.0 L373.0 236.0 L388.0 336.0 L408.0 436.0 L418.0 536.0 L423.0 594.0" fill="none" stroke="#dfdfde" stroke-width="4.6" stroke-linejoin="round"/>
<path d="M208.0 136.0 L283.0 211.0 L358.0 286.0 L433.0 361.0 L508.0 411.0 L608.0 436.0 L809.0 461.0" fill="none" stroke="#dfdfde" stroke-width="4.6" stroke-linejoin="round"/>
<path d="M458.0 186.0 L433.0 286.0 L408.0 386.0 L383.0 486.0 L358.0 594.0" fill="none" stroke="#dfdfde" stroke-width="4.6" stroke-linejoin="round"/>
<path d="M327.0 87.0 L387.0 107.0 L447.0 137.0" fill="none" stroke="#dfdfde" stroke-width="4.6" stroke-linejoin="round"/>
<path d="M367.0 467.0 L427.0 497.0 L487.0 517.0" fill="none" stroke="#dfdfde" stroke-width="4.6" stroke-linejoin="round"/>
<path d="M287.0 137.0 L307.0 187.0 L347.0 227.0" fill="none" stroke="#dfdfde" stroke-width="4.6" stroke-linejoin="round"/>
<path d="M260.0 0.0 L257.0 38.0 L247.0 76.0 L222.0 120.0 L206.0 152.0 L196.0 190.0 L203.0 222.0 L234.0 253.0 L272.0 276.0 L304.0 299.0 L342.0 347.0 L339.0 407.0 L326.0 487.0 L336.0 550.0 L348.0 594.0" fill="none" stroke="#ffffff" stroke-width="3" stroke-linejoin="round"/>
<path d="M0.0 86.0 L63.0 95.0 L105.0 133.0 L152.0 143.0 L206.0 152.0 L241.0 165.0 L285.0 177.0 L317.0 190.0" fill="none" stroke="#ffffff" stroke-width="3" stroke-linejoin="round"/>
<path d="M60.0 193.0 L136.0 192.0 L203.0 203.0 L241.0 222.0" fill="none" stroke="#ffffff" stroke-width="3" stroke-linejoin="round"/>
<path d="M60.0 190.0 L95.0 158.0 L120.0 136.0" fill="none" stroke="#ffffff" stroke-width="3" stroke-linejoin="round"/>
<path d="M136.0 190.0 L143.0 222.0 L149.0 297.0" fill="none" stroke="#ffffff" stroke-width="3" stroke-linejoin="round"/>
<path d="M158.0 0.0 L177.0 19.0 L190.0 32.0 L228.0 63.0 L241.0 89.0" fill="none" stroke="#ffffff" stroke-width="3" stroke-linejoin="round"/>
<path d="M294.0 44.0 L317.0 33.0 L346.0 27.0 L380.0 21.0 L428.0 19.0 L448.0 24.0 L453.0 28.0 L431.0 75.0 L425.0 102.0 L407.0 147.0" fill="none" stroke="#ffffff" stroke-width="3" stroke-linejoin="round"/>
<path d="M630.0 0.0 L621.0 32.0 L598.0 44.0 L554.0 73.0 L497.0 92.0 L465.0 105.0" fill="none" stroke="#ffffff" stroke-width="3" stroke-linejoin="round"/>
<path d="M754.0 0.0 L719.0 32.0 L687.0 51.0 L671.0 73.0 L649.0 95.0 L602.0 133.0 L535.0 158.0 L497.0 165.0 L456.0 162.0" fill="none" stroke="#ffffff" stroke-width="3" stroke-linejoin="round"/>
<path d="M469.0 0.0 L452.0 32.0 L435.0 72.0" fill="none" stroke="#ffffff" stroke-width="3" stroke-linejoin="round"/>
<path d="M507.0 407.0 L579.0 417.0 L624.0 430.0 L719.0 449.0 L809.0 474.0" fill="none" stroke="#ffffff" stroke-width="3" stroke-linejoin="round"/>
<path d="M665.0 417.0 L757.0 432.0 L809.0 447.0" fill="none" stroke="#ffffff" stroke-width="3" stroke-linejoin="round"/>
<path d="M453.0 525.0 L507.0 474.0 L579.0 430.0" fill="none" stroke="#ffffff" stroke-width="3" stroke-linejoin="round"/>
<path d="M0.0 310.0 L41.0 322.0 L95.0 354.0 L165.0 386.0 L234.0 417.0 L285.0 430.0 L329.0 427.0" fill="none" stroke="#ffffff" stroke-width="3" stroke-linejoin="round"/>
<path d="M76.0 512.0 L127.0 474.0 L203.0 427.0 L241.0 402.0 L272.0 367.0 L304.0 335.0 L326.0 316.0" fill="none" stroke="#ffffff" stroke-width="3" stroke-linejoin="round"/>
<path d="M307.0 0.0 L357.0 87.0 L407.0 167.0 L447.0 267.0 L437.0 367.0 L407.0 467.0 L387.0 594.0" fill="none" stroke="#ffffff" stroke-width="3" stroke-linejoin="round"/>
<path d="M257.0 117.0 L357.0 147.0 L467.0 167.0 L507.0 187.0" fill="none" stroke="#ffffff" stroke-width="3" stroke-linejoin="round"/>
<path d="M337.0 287.0 L427.0 307.0 L507.0 327.0" fill="none" stroke="#ffffff" stroke-width="3" stroke-linejoin="round"/>
<path d="M358.0 136.0 L373.0 236.0 L388.0 336.0 L408.0 436.0 L418.0 536.0 L423.0 594.0" fill="none" stroke="#ffffff" stroke-width="3" stroke-linejoin="round"/>
<path d="M208.0 136.0 L283.0 211.0 L358.0 286.0 L433.0 361.0 L508.0 411.0 L608.0 436.0 L809.0 461.0" fill="none" stroke="#ffffff" stroke-width="3" stroke-linejoin="round"/>
<path d="M458.0 186.0 L433.0 286.0 L408.0 386.0 L383.0 486.0 L358.0 594.0" fill="none" stroke="#ffffff" stroke-width="3" stroke-linejoin="round"/>
<path d="M327.0 87.0 L387.0 107.0 L447.0 137.0" fill="none" stroke="#ffffff" stroke-width="3" stroke-linejoin="round"/>
<path d="M367.0 467.0 L427.0 497.0 L487.0 517.0" fill="none" stroke="#ffffff" stroke-width="3" stroke-linejoin="round"/>
<path d="M287.0 137.0 L307.0 187.0 L347.0 227.0" fill="none" stroke="#ffffff" stroke-width="3" stroke-linejoin="round"/>
<path d="M68.0 348.0 L63.0 392.0 L32.0 436.0 L32.0 462.0 L47.0 582.0" fill="none" stroke="#dfe3e6" stroke-width="1" stroke-linejoin="round"/>
<path d="M643.0 0.0 L624.0 41.0 L592.0 70.0 L567.0 92.0 L522.0 124.0 L465.0 127.0 L434.0 136.0" fill="none" stroke="#dfe3e6" stroke-width="1" stroke-linejoin="round"/>
<path d="M0.0 267.0 L47.0 307.0 L157.0 357.0" fill="none" stroke="#dfe3e6" stroke-width="1" stroke-linejoin="round"/>
<path d="M484.0 277.0 L604.0 272.0 L733.0 294.0 L774.0 301.0 L809.0 322.0" fill="none" stroke="#dfe3e6" stroke-width="1" stroke-linejoin="round"/>
</svg>
<div class="mlab" style="left:168px;top:60px;font-size:14px;letter-spacing:0.3px">Maracena</div>
<div class="mlab" style="left:361px;top:326px;font-size:18.5px;letter-spacing:0.2px">GRANADA</div>
<div class="mlab" style="left:-1px;top:188px;font-size:10px;letter-spacing:0px">(Bobadilla)</div>
<div class="mlab" style="left:66.5px;top:523.3px;font-size:14px;letter-spacing:0.4px">Churri</div>
<div class="mlab" style="left:102px;top:537px;font-size:14px;letter-spacing:0px">V</div>
<div class="mlab" style="left:209px;top:567px;font-size:14px;letter-spacing:0.5px">Armilla</div>
<div class="mlab" style="left:262px;top:2px;font-size:10px;color:#a3afbd;transform-origin:0 0;transform:rotate(80deg)">ción de Granada</div>
<div class="mlab" style="left:237px;top:253px;font-size:10px;color:#a3afbd;transform-origin:0 0;transform:rotate(42deg)">Circunvalación de Granada</div>
<div class="mlab" style="left:458px;top:514px;font-size:11.3px;color:#a3afbd;transform-origin:0 0;transform:rotate(-40deg)">Ronda Sur</div>
<div class="mlab" style="left:344px;top:510px;font-size:10px;color:#a3afbd;transform-origin:0 0;transform:rotate(75deg)">Circunvalación d</div>
<div class="mk t3" style="left:145.00px;top:37.00px">3</div><div class="mk t3" style="left:206.62px;top:37.00px">3</div><div class="mk t3" style="left:268.25px;top:37.00px">3</div><div class="mk t3" style="left:329.88px;top:37.00px">3</div><div class="mk t3" style="left:391.50px;top:37.00px">3</div><div class="mk t3" style="left:453.12px;top:37.00px">3</div><div class="mk t3" style="left:514.75px;top:37.00px">3</div><div class="mk t3" style="left:576.38px;top:37.00px">3</div><div class="mk t3" style="left:638.00px;top:37.00px">3</div><div class="mk t3" style="left:145.00px;top:98.62px">3</div><div class="mk t5" style="left:207.62px;top:99.62px">4</div><div class="mk t5" style="left:269.25px;top:99.62px">4</div><div class="mk t5" style="left:330.88px;top:99.62px">4</div><div class="mk t5" style="left:392.50px;top:99.62px">4</div><div class="mk t3" style="left:453.12px;top:98.62px">3</div><div class="mk t3" style="left:514.75px;top:98.62px">3</div><div class="mk t3" style="left:576.38px;top:98.62px">3</div><div class="mk t3" style="left:638.00px;top:98.62px">3</div><div class="mk t5" style="left:146.00px;top:161.25px">4</div><div class="mk t5" style="left:207.62px;top:161.25px">4</div><div class="mk t5" style="left:269.25px;top:161.25px">4</div><div class="mk t5" style="left:330.88px;top:161.25px">4</div><div class="mk t3" style="left:391.50px;top:160.25px">3</div><div class="mk t5" style="left:454.12px;top:161.25px">4</div><div class="mk t3" style="left:514.75px;top:160.25px">3</div><div class="mk t3" style="left:576.38px;top:160.25px">3</div><div class="mk t3" style="left:638.00px;top:160.25px">3</div><div class="mk t3" style="left:145.00px;top:221.88px">1</div><div class="mk t5" style="left:207.62px;top:222.88px">5</div><div class="mk t5" style="left:269.25px;top:222.88px">5</div><div class="mk t5" style="left:330.88px;top:222.88px">5</div><div class="mk t5" style="left:392.50px;top:222.88px">4</div><div class="mk t3" style="left:453.12px;top:221.88px">3</div><div class="mk t3" style="left:514.75px;top:221.88px">3</div><div class="mk t3" style="left:576.38px;top:221.88px">3</div><div class="mk t3" style="left:638.00px;top:221.88px">3</div><div class="mk t5" style="left:146.00px;top:284.50px">4</div><div class="mk t5" style="left:207.62px;top:284.50px">4</div><div class="mk t5" style="left:269.25px;top:284.50px">5</div><div class="mk t5" style="left:330.88px;top:284.50px">5</div><div class="mk t5" style="left:392.50px;top:284.50px">5</div><div class="mk t3" style="left:453.12px;top:283.50px">3</div><div class="mk t3" style="left:514.75px;top:283.50px">3</div><div class="mk t3" style="left:576.38px;top:283.50px">3</div><div class="mk t3" style="left:638.00px;top:283.50px">3</div><div class="mk t5" style="left:146.00px;top:346.12px">4</div><div class="mk t5" style="left:207.62px;top:346.12px">5</div><div class="mk t5" style="left:269.25px;top:346.12px">5</div><div class="mk t5" style="left:330.88px;top:346.12px">5</div><div class="mk t5" style="left:392.50px;top:346.12px">5</div><div class="mk t5" style="left:454.12px;top:346.12px">5</div><div class="mk t5" style="left:515.75px;top:346.12px">4</div><div class="mk t3" style="left:576.38px;top:345.12px">3</div><div class="mk t3" style="left:638.00px;top:345.12px">3</div><div class="mk t3" style="left:145.00px;top:406.75px">3</div><div class="mk t5" style="left:207.62px;top:407.75px">5</div><div class="mk t5" style="left:269.25px;top:407.75px">5</div><div class="mk t5" style="left:330.88px;top:407.75px">5</div><div class="mk t5" style="left:392.50px;top:407.75px">5</div><div class="mk t5" style="left:454.12px;top:407.75px">5</div><div class="mk t3" style="left:514.75px;top:406.75px">3</div><div class="mk t3" style="left:576.38px;top:406.75px">3</div><div class="mk t3" style="left:638.00px;top:406.75px">3</div><div class="mk t5" style="left:146.00px;top:469.38px">4</div><div class="mk t5" style="left:207.62px;top:469.38px">5</div><div class="mk t5" style="left:269.25px;top:469.38px">5</div><div class="mk t5" style="left:330.88px;top:469.38px">5</div><div class="mk t5" style="left:392.50px;top:469.38px">5</div><div class="mk t5" style="left:454.12px;top:469.38px">5</div><div class="mk t5" style="left:515.75px;top:469.38px">4</div><div class="mk t3" style="left:576.38px;top:468.38px">3</div><div class="mk t3" style="left:638.00px;top:468.38px">3</div><div class="mk t3" style="left:145.00px;top:530.00px">3</div><div class="mk t5" style="left:207.62px;top:531.00px">4</div><div class="mk t5" style="left:269.25px;top:531.00px">4</div><div class="mk t5" style="left:330.88px;top:531.00px">5</div><div class="mk t5" style="left:392.50px;top:531.00px">4</div><div class="mk t5" style="left:454.12px;top:531.00px">4</div><div class="mk t3" style="left:514.75px;top:530.00px">3</div><div class="mk t3" style="left:576.38px;top:530.00px">3</div><div class="mk t3" style="left:638.00px;top:530.00px">3</div>
  <div class="zoom"><div style="position:absolute;left:0;top:0;width:30px;height:30px;border-bottom:1px solid #ccc"><svg class="abs" style="left:8.5px;top:9px" width="13" height="13" viewBox="0 0 13 13" stroke="#000" stroke-width="2.2"><path d="M6.5 0.5v12M0.5 6.5h12"/></svg></div><div style="position:absolute;left:0;top:31px;width:30px;height:29px"><svg class="abs" style="left:9.5px;top:13px" width="13" height="3" viewBox="0 0 13 3" stroke="#000" stroke-width="2.2"><path d="M0 1.5h13"/></svg></div></div>
  <div class="attr"><span style="display:inline-block;width:12px;height:8px;vertical-align:0px;background:linear-gradient(#4c7be1 50%,#ffd500 50%)"></span> <a>Leaflet</a> | © <a>OpenStreetMap</a> contributors © <a>CARTO</a></div>
</div>
</body>
</html>
